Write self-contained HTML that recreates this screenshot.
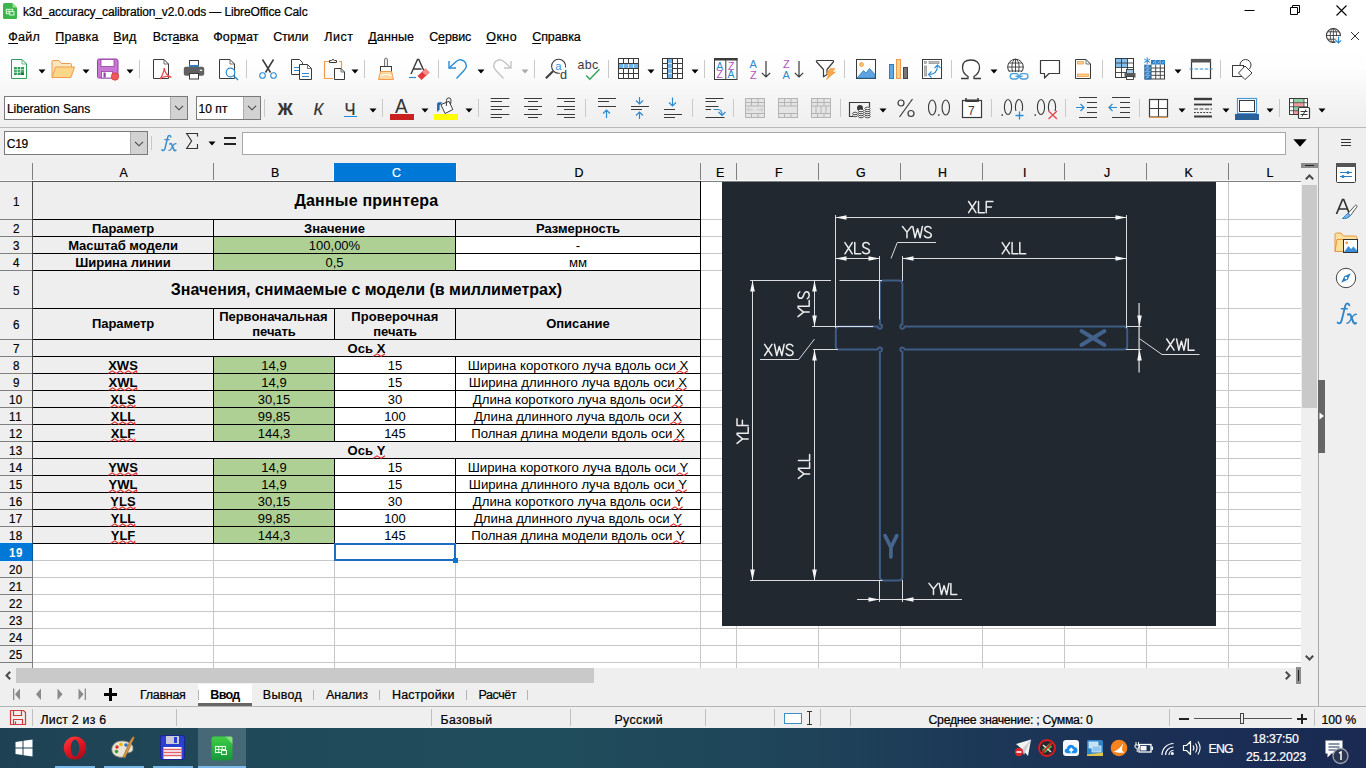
<!DOCTYPE html>
<html><head><meta charset="utf-8"><title>calc</title>
<style>
html,body{margin:0;padding:0;}
body{width:1366px;height:768px;overflow:hidden;position:relative;background:#efefef;font-family:"Liberation Sans",sans-serif;font-size:12px;color:#000;}
.abs{position:absolute;}
div,span,svg{box-sizing:border-box;}
.t{position:absolute;white-space:nowrap;line-height:1;}
.cell{overflow:hidden;white-space:nowrap;}
.wv{text-decoration:underline wavy #e03030 1px;text-underline-offset:2px;text-decoration-skip-ink:none;}

</style></head>
<body>
<!-- titlebar -->

<div class="abs" style="left:0;top:0;width:1366px;height:50px;background:#fff;"></div>
<svg class="abs" style="left:3px;top:3px" width="14" height="16" viewBox="0 0 14 16">
 <path d="M1.500 0H9.500L14 4.500V14.500Q14 16 12.500 16H1.500Q0 16 0 14.500V1.500Q0 0 1.500 0Z" fill="#3cb54a"/>
 <path d="M9.500 0L14 4.500H9.500Z" fill="#96e38f"/>
 <rect x="3.300" y="6.300" width="6.400" height="4.400" fill="none" stroke="#eaffea" stroke-width="0.900"/>
 <path d="M3.300 8.500H9.700M6 6.300V10.700" stroke="#eaffea" stroke-width="0.700"/>
 <rect x="6.800" y="8.600" width="4.200" height="3.400" fill="#3cb54a" stroke="#eaffea" stroke-width="0.900"/>
</svg>
<div class="t" style="left:23.0px;top:5.3px;font-size:12px;line-height:14px;letter-spacing:-0.13px;-webkit-text-stroke:0.22px #000;">k3d_accuracy_calibration_v2.0.ods — LibreOffice Calc</div>

<svg class="abs" style="left:1240px;top:0" width="126" height="24" viewBox="0 0 126 24">
 <path d="M4.5 10.5h10" stroke="#000" stroke-width="1"/>
 <path d="M50.5 7.500h7v7h-7zM52.5 7.500v-2h7v7h-2" fill="none" stroke="#000" stroke-width="1"/>
 <path d="M96.5 5.500l10 10M106.500 5.500l-10 10" stroke="#000" stroke-width="1.1"/>
</svg>

<!-- menubar -->
<div class="t" style="left:8.2px;top:30.1px;font-size:12.5px;line-height:15px;letter-spacing:0.316px;-webkit-text-stroke:0.22px #000;"><span style="text-decoration:underline;text-underline-offset:1.5px;text-decoration-thickness:1px">Ф</span>айл</div>
<div class="t" style="left:55.2px;top:30.1px;font-size:12.5px;line-height:15px;letter-spacing:0.211px;-webkit-text-stroke:0.22px #000;"><span style="text-decoration:underline;text-underline-offset:1.5px;text-decoration-thickness:1px">П</span>равка</div>
<div class="t" style="left:113.2px;top:30.1px;font-size:12.5px;line-height:15px;letter-spacing:0.292px;-webkit-text-stroke:0.22px #000;"><span style="text-decoration:underline;text-underline-offset:1.5px;text-decoration-thickness:1px">В</span>ид</div>
<div class="t" style="left:152.7px;top:30.1px;font-size:12.5px;line-height:15px;letter-spacing:-0.138px;-webkit-text-stroke:0.22px #000;">Вст<span style="text-decoration:underline;text-underline-offset:1.5px;text-decoration-thickness:1px">а</span>вка</div>
<div class="t" style="left:213.2px;top:30.1px;font-size:12.5px;line-height:15px;letter-spacing:0.182px;-webkit-text-stroke:0.22px #000;">Фор<span style="text-decoration:underline;text-underline-offset:1.5px;text-decoration-thickness:1px">м</span>ат</div>
<div class="t" style="left:273.2px;top:30.1px;font-size:12.5px;line-height:15px;letter-spacing:-0.203px;-webkit-text-stroke:0.22px #000;">Стили</div>
<div class="t" style="left:324.2px;top:30.1px;font-size:12.5px;line-height:15px;letter-spacing:0.582px;-webkit-text-stroke:0.22px #000;">Лист</div>
<div class="t" style="left:368.2px;top:30.1px;font-size:12.5px;line-height:15px;letter-spacing:0.138px;-webkit-text-stroke:0.22px #000;"><span style="text-decoration:underline;text-underline-offset:1.5px;text-decoration-thickness:1px">Д</span>анные</div>
<div class="t" style="left:429.2px;top:30.1px;font-size:12.5px;line-height:15px;letter-spacing:-0.135px;-webkit-text-stroke:0.22px #000;">С<span style="text-decoration:underline;text-underline-offset:1.5px;text-decoration-thickness:1px">е</span>рвис</div>
<div class="t" style="left:486.2px;top:30.1px;font-size:12.5px;line-height:15px;letter-spacing:0.488px;-webkit-text-stroke:0.22px #000;"><span style="text-decoration:underline;text-underline-offset:1.5px;text-decoration-thickness:1px">О</span>кно</div>
<div class="t" style="left:532.2px;top:30.1px;font-size:12.5px;line-height:15px;letter-spacing:-0.078px;-webkit-text-stroke:0.22px #000;"><span style="text-decoration:underline;text-underline-offset:1.5px;text-decoration-thickness:1px">С</span>правка</div>

<svg class="abs" style="left:1324px;top:26px" width="40" height="20" viewBox="0 0 40 20">
 <circle cx="9.400" cy="9.500" r="7" fill="#fff" stroke="#3a3a3a" stroke-width="1.100"/>
 <ellipse cx="9.400" cy="9.500" rx="3.200" ry="7" fill="none" stroke="#3a3a3a" stroke-width="0.900"/>
 <path d="M2.400 9.500h14M9.400 2.500v14M3.800 5.800h11.200M3.800 13.200h11.200" stroke="#3a3a3a" stroke-width="0.900" fill="none"/>
 <rect x="11.500" y="10" width="6" height="8" fill="#fff" opacity="0.850"/>
 <path d="M14.500 10.500v6.300M11.800 14.300l2.700 2.700 2.700-2.700" stroke="#2a8ad4" stroke-width="1.100" fill="none"/>
 <path d="M27 6l8 8M35 6l-8 8" stroke="#333" stroke-width="1"/>
</svg>

<!-- toolbar1 -->
<div class="abs" style="left:0;top:50px;width:1366px;height:77px;background:linear-gradient(180deg,#ffffff 0%,#fdfdfd 25%,#f4f4f4 65%,#efefef 100%);"></div><div class="abs" style="left:0px;top:127px;width:1366px;height:1px;background:#b9b9b9;"></div>
<svg class="abs" style="left:7.0px;top:57px;overflow:visible" width="24" height="24" viewBox="0 0 24 24"><path d="M4.500 2.500H15L19.500 7V21.500H4.500Z" fill="#fff" stroke="#2e9e5a" stroke-width="1"/><path d="M15 2.500V7H19.500" fill="none" stroke="#2e9e5a" stroke-width="0.700"/>
<rect x="7" y="10" width="10" height="8" fill="#2e9e5a"/><path d="M7 12.700H17M7 15.300H17M10.300 10V18M13.600 10V18" stroke="#fff" stroke-width="0.700"/><path d="M13.600 15.300H17V18H13.600Z" fill="#1c7a40"/></svg>
<svg class="abs" style="left:51.4px;top:57px;overflow:visible" width="24" height="24" viewBox="0 0 24 24"><path d="M1 20V4.500Q1 3.500 2 3.500H8L10.500 6.500H19.500Q20.500 6.500 20.500 7.500V10" fill="#fbe7bd" stroke="#f29b4a" stroke-width="1"/>
<path d="M1 20.500L4.500 10H23.500L20 20.500Z" fill="#fad689" stroke="#f29b4a" stroke-width="1" stroke-linejoin="round"/></svg>
<svg class="abs" style="left:95.7px;top:57px;overflow:visible" width="24" height="24" viewBox="0 0 24 24"><path d="M3 2H20Q22 2 22 4V19Q22 21 20 21H3Q1.500 21 1.500 19.500V3.500Q1.500 2 3 2Z" fill="#c878d2" stroke="#9a3fa6" stroke-width="1"/>
<rect x="5" y="2.500" width="13" height="7" fill="#fff" stroke="#9a3fa6" stroke-width="0.800"/>
<rect x="5.500" y="14.500" width="11" height="6.500" fill="#fff" stroke="#9a3fa6" stroke-width="0.800"/><rect x="7.500" y="15.500" width="2.200" height="5" fill="#9a3fa6"/>
<circle cx="19" cy="19.500" r="3.700" fill="#ee5a5a" stroke="#d83a3a" stroke-width="0.800"/></svg>
<svg class="abs" style="left:149.0px;top:57px;overflow:visible" width="24" height="24" viewBox="0 0 24 24"><path d="M4.500 2.500H15L19.500 7V21.500H4.500Z" fill="#fff" stroke="#3a3a3a" stroke-width="1"/><path d="M15 2.500V7H19.500" fill="none" stroke="#3a3a3a" stroke-width="0.700"/>
<path d="M11 22C13 19 15 15 15.300 11C15.500 14 17 18 22.500 20.500M11 22C14 19.500 18 18.500 22.500 20.500" fill="none" stroke="#e5484d" stroke-width="1.300"/></svg>
<svg class="abs" style="left:182.0px;top:57px;overflow:visible" width="24" height="24" viewBox="0 0 24 24"><rect x="7.500" y="3.500" width="9" height="6" fill="#fff" stroke="#3a3a3a" stroke-width="1"/>
<rect x="7" y="8" width="10" height="2.500" fill="#2a7fc4"/>
<rect x="1.800" y="9.800" width="20.400" height="9" rx="2" fill="#606060"/>
<rect x="7.500" y="16.500" width="9" height="5.500" fill="#fff" stroke="#3a3a3a" stroke-width="1"/><rect x="17.800" y="12.700" width="2.400" height="1.200" fill="#fff"/></svg>
<svg class="abs" style="left:215.0px;top:57px;overflow:visible" width="24" height="24" viewBox="0 0 24 24"><path d="M4.500 2.500H15L19.500 7V21.500H4.500Z" fill="#fff" stroke="#3a3a3a" stroke-width="1"/><path d="M15 2.500V7H19.500" fill="none" stroke="#3a3a3a" stroke-width="0.700"/>
<circle cx="15.500" cy="15.500" r="4.300" fill="#fff" stroke="#2a8ad4" stroke-width="1.200"/><path d="M18.700 18.700L23 23" stroke="#2a8ad4" stroke-width="1.400"/></svg>
<svg class="abs" style="left:256.0px;top:57px;overflow:visible" width="24" height="24" viewBox="0 0 24 24"><path d="M6.500 2.500L14.500 15.500M17.500 2.500L9.500 15.500" stroke="#3a3a3a" stroke-width="1.500" fill="none"/>
<circle cx="6.500" cy="18.500" r="2.800" fill="#fff" stroke="#2a8ad4" stroke-width="1.100"/><circle cx="17.500" cy="18.500" r="2.800" fill="#fff" stroke="#2a8ad4" stroke-width="1.100"/></svg>
<svg class="abs" style="left:289.0px;top:57px;overflow:visible" width="24" height="24" viewBox="0 0 24 24"><path d="M2.500 2.500H10.500L13.500 5.500V17.500H2.500Z" fill="#fff" stroke="#3a3a3a" stroke-width="1"/><path d="M5 10.500H11M5 13.500H11" stroke="#2a8ad4" stroke-width="1"/>
<path d="M10.500 7.500H18.500L22.500 11.500V22.500H10.500Z" fill="#fff" stroke="#3a3a3a" stroke-width="1"/><path d="M18.500 7.500V11.500H22.500" fill="none" stroke="#3a3a3a" stroke-width="0.700"/><path d="M13 16.500H20M13 19.500H20" stroke="#2a8ad4" stroke-width="1"/></svg>
<svg class="abs" style="left:321.5px;top:57px;overflow:visible" width="24" height="24" viewBox="0 0 24 24"><path d="M7 4.500H2.500V21.500H11M17 4.500H19.500V12" fill="none" stroke="#f29b4a" stroke-width="1.200"/>
<path d="M7.500 5.500V3.500H9.500Q11 1 12.500 3.500H14.500V5.500Z" fill="#fff" stroke="#3a3a3a" stroke-width="1"/>
<path d="M12.500 11.500H19L22.500 15V22.500H12.500Z" fill="#fff" stroke="#3a3a3a" stroke-width="1"/><path d="M19 11.500V15H22.500" fill="none" stroke="#3a3a3a" stroke-width="0.700"/></svg>
<svg class="abs" style="left:373.5px;top:57px;overflow:visible" width="24" height="24" viewBox="0 0 24 24"><path d="M10.500 9V3Q10.500 1 12 1Q13.500 1 13.500 3V9" fill="#e8e8e8" stroke="#777" stroke-width="1"/>
<rect x="6.500" y="9.500" width="11" height="5" fill="#fff" stroke="#3a3a3a" stroke-width="1"/>
<path d="M6.500 14.500L4.500 22.500H19.500L17.500 14.500Z" fill="#fbd9a0" stroke="#f29b4a" stroke-width="1"/><path d="M6 18.500Q12 16.500 18.200 18.500" stroke="#fff" stroke-width="1" fill="none"/></svg>
<svg class="abs" style="left:406.5px;top:57px;overflow:visible" width="24" height="24" viewBox="0 0 24 24"><path d="M4 17L10.500 2.500H11.800L17 14M6.300 12H14.500" fill="none" stroke="#3a3a3a" stroke-width="1.400"/>
<path d="M2 20.500H9" stroke="#2a8ad4" stroke-width="1.200"/>
<path d="M10.500 19L18.500 11.500L22.500 15.500L14.500 23Z" fill="#e03a3a"/><path d="M15 14.800L19 18.800L22.500 15.500L18.500 11.500Z" fill="#f58a8a"/></svg>
<svg class="abs" style="left:446.0px;top:57px;overflow:visible" width="24" height="24" viewBox="0 0 24 24"><path d="M4.500 11.500H14Q20.500 11.500 20.500 6.500" fill="none" stroke="none"/>
<path d="M3 4V11H10" fill="none" stroke="#2a8ad4" stroke-width="1.400"/><path d="M3 11L10.500 4.200Q14.500 1 18.500 4.500Q22.500 9 18 13.500L10.500 21.500" fill="none" stroke="#2a8ad4" stroke-width="1.400"/></svg>
<svg class="abs" style="left:490.0px;top:57px;overflow:visible" width="24" height="24" viewBox="0 0 24 24"><path d="M21 4V11H14" fill="none" stroke="#c4c4c4" stroke-width="1.400"/><path d="M21 11L13.500 4.200Q9.500 1 5.500 4.500Q1.500 9 6 13.500L13.500 21.500" fill="none" stroke="#c4c4c4" stroke-width="1.400"/></svg>
<svg class="abs" style="left:545.0px;top:57px;overflow:visible" width="24" height="24" viewBox="0 0 24 24"><path d="M20.500 10.500A7 7 0 1 0 14.800 16.200" fill="#fff" stroke="#3a3a3a" stroke-width="1.100"/><path d="M0.900 21.300L8 14.200" stroke="#3a3a3a" stroke-width="2"/>
<text x="10.300" y="12.600" font-family="Liberation Sans" font-size="11.300" fill="#3a94d6">a</text><text x="15" y="21.600" font-family="Liberation Sans" font-size="12.700" fill="#3a3a3a">d</text></svg>
<svg class="abs" style="left:577.0px;top:57px;overflow:visible" width="24" height="24" viewBox="0 0 24 24"><text x="0.600" y="11.600" font-family="Liberation Sans" font-size="12.400" fill="#3a3a3a" letter-spacing="0.350">abc</text>
<path d="M9.200 18.500L12.800 22.200L22.500 12.300" fill="none" stroke="#2ea35a" stroke-width="1.400"/></svg>
<svg class="abs" style="left:616.5px;top:57px;overflow:visible" width="24" height="24" viewBox="0 0 24 24"><rect x="1.500" y="1.500" width="20" height="20" fill="#fff" stroke="#3a3a3a" stroke-width="1"/><rect x="2" y="6.500" width="19" height="5" fill="#83beec"/><rect x="2" y="6.500" width="19" height="5" fill="#59a5e6" opacity="0.500"/><path d="M6.500 1.500V21.500M11.500 1.500V21.500M16.500 1.500V21.500M1.500 6.500H21.500M1.500 11.500H21.500M1.500 16.500H21.500" stroke="#3a3a3a" stroke-width="1"/><path d="M6.500 7V11M11.500 7V11M16.500 7V11" stroke="#cfe6fa" stroke-width="1"/></svg>
<svg class="abs" style="left:660.5px;top:57px;overflow:visible" width="24" height="24" viewBox="0 0 24 24"><rect x="1.500" y="1.500" width="20" height="20" fill="#fff" stroke="#3a3a3a" stroke-width="1"/><rect x="6.500" y="2" width="5" height="19" fill="#83beec"/><rect x="6.500" y="2" width="5" height="19" fill="#59a5e6" opacity="0.500"/><path d="M6.500 1.500V21.500M11.500 1.500V21.500M16.500 1.500V21.500M1.500 6.500H21.500M1.500 11.500H21.500M1.500 16.500H21.500" stroke="#3a3a3a" stroke-width="1"/><path d="M7 6.500H11M7 11.500H11M7 16.500H11" stroke="#cfe6fa" stroke-width="1"/></svg>
<svg class="abs" style="left:713.5px;top:57px;overflow:visible" width="24" height="24" viewBox="0 0 24 24"><rect x="0.500" y="1.500" width="22.500" height="21" fill="#fff" stroke="#3a3a3a" stroke-width="1"/><rect x="0" y="1" width="23.500" height="2.500" fill="#3a3a3a"/><path d="M11.800 3V22.500" stroke="#3a3a3a" stroke-width="1"/>
<text x="2.300" y="12.600" font-family="Liberation Sans" font-size="10.500" fill="#2a8ad4">A</text><text x="2.600" y="21" font-family="Liberation Sans" font-size="10.500" fill="#b452bd">Z</text>
<text x="13.900" y="12.600" font-family="Liberation Sans" font-size="10.500" fill="#b452bd">Z</text><text x="13.500" y="21" font-family="Liberation Sans" font-size="10.500" fill="#2a8ad4">A</text></svg>
<svg class="abs" style="left:747.5px;top:57px;overflow:visible" width="24" height="24" viewBox="0 0 24 24"><text x="1.500" y="11" font-family="Liberation Sans" font-size="11" fill="#2a8ad4">A</text><text x="2" y="22" font-family="Liberation Sans" font-size="11" fill="#b452bd">Z</text>
<path d="M18 4V20M13.800 15.800L18 20L22.200 15.800" fill="none" stroke="#3a3a3a" stroke-width="1.200"/></svg>
<svg class="abs" style="left:780.5px;top:57px;overflow:visible" width="24" height="24" viewBox="0 0 24 24"><text x="2" y="11" font-family="Liberation Sans" font-size="11" fill="#b452bd">Z</text><text x="1.500" y="22" font-family="Liberation Sans" font-size="11" fill="#2a8ad4">A</text>
<path d="M18 4V20M13.800 15.800L18 20L22.200 15.800" fill="none" stroke="#3a3a3a" stroke-width="1.200"/></svg>
<svg class="abs" style="left:814.0px;top:57px;overflow:visible" width="24" height="24" viewBox="0 0 24 24"><path d="M3.500 3.500H18.500Q20.300 3.500 19.300 5L13 12.500V17.500L9.500 19.800V12.500L2.700 5Q1.700 3.500 3.500 3.500Z" fill="#fff" stroke="#3a3a3a" stroke-width="1.200" stroke-linejoin="round"/>
<path d="M16 11.500H21L18.300 15H21.500L12.500 22.500L15 17H12.300Z" fill="#f7a84a" stroke="#e98a2a" stroke-width="0.500"/></svg>
<svg class="abs" style="left:854.0px;top:57px;overflow:visible" width="24" height="24" viewBox="0 0 24 24"><rect x="2.500" y="2.500" width="19" height="19" fill="#fff" stroke="#3a3a3a" stroke-width="1"/>
<circle cx="7.500" cy="7.500" r="2" fill="#f9c06a" stroke="#f29b4a" stroke-width="0.800"/>
<path d="M3 21L9.500 13.500L12 16L15.500 11.500L21 17.500V21Z" fill="#5fa4e0" stroke="#2a7fc4" stroke-width="0.800"/></svg>
<svg class="abs" style="left:886.5px;top:57px;overflow:visible" width="24" height="24" viewBox="0 0 24 24"><rect x="2.500" y="7.500" width="4" height="14" fill="#62a8e6" stroke="#2a7fc4" stroke-width="1"/>
<rect x="9.500" y="2.500" width="4" height="19" fill="#fad28a" stroke="#f29b4a" stroke-width="1"/>
<rect x="16.500" y="10.500" width="4" height="11" fill="#777" stroke="#444" stroke-width="1"/></svg>
<svg class="abs" style="left:920.0px;top:57px;overflow:visible" width="24" height="24" viewBox="0 0 24 24"><rect x="2.500" y="2.500" width="19" height="19" fill="#fff" stroke="#3a3a3a" stroke-width="1"/>
<rect x="4.500" y="4.500" width="2" height="2" fill="#bbb" stroke="#888" stroke-width="0.600"/><rect x="9" y="4.500" width="10" height="2.200" fill="#bbb" stroke="#888" stroke-width="0.600"/><rect x="4.500" y="9" width="2.200" height="10" fill="#bbb" stroke="#888" stroke-width="0.600"/>
<path d="M8.500 17.500Q17.500 17.500 17.500 8.500M14.500 11L17.500 8L20.500 11M11.500 14.500L8.500 17.500L11.500 20.500" fill="none" stroke="#2a8ad4" stroke-width="1.100"/></svg>
<svg class="abs" style="left:959.0px;top:57px;overflow:visible" width="24" height="24" viewBox="0 0 24 24"><path d="M2 21.500H9V19.500Q3.500 16.500 3.500 10.500Q3.500 3 12 3Q20.500 3 20.500 10.500Q20.500 16.500 15 19.500V21.500H22" fill="none" stroke="#3a3a3a" stroke-width="1.300"/></svg>
<svg class="abs" style="left:1005.0px;top:57px;overflow:visible" width="24" height="24" viewBox="0 0 24 24"><circle cx="10.500" cy="10" r="7.800" fill="#fff" stroke="#3a3a3a" stroke-width="1"/><ellipse cx="10.500" cy="10" rx="3.600" ry="7.800" fill="none" stroke="#3a3a3a" stroke-width="0.900"/>
<path d="M2.700 10H18.300M10.500 2.200V17.800M4 6H17M4 14H17" stroke="#3a3a3a" stroke-width="0.900" fill="none"/>
<rect x="4" y="15" width="20" height="8.500" fill="#fbfbfb"/>
<rect x="5.200" y="16.600" width="8.300" height="5.400" rx="2.700" fill="none" stroke="#4aa0dc" stroke-width="1.300"/><rect x="14.700" y="16.600" width="8.300" height="5.400" rx="2.700" fill="none" stroke="#4aa0dc" stroke-width="1.300"/><path d="M10.500 19.300H17.700" stroke="#4aa0dc" stroke-width="1.300"/></svg>
<svg class="abs" style="left:1038.0px;top:57px;overflow:visible" width="24" height="24" viewBox="0 0 24 24"><path d="M2.500 3.500H21.500V16.500H11L6.500 21V16.500H2.500Z" fill="#fff" stroke="#3a3a3a" stroke-width="1.200" stroke-linejoin="round"/></svg>
<svg class="abs" style="left:1071.0px;top:57px;overflow:visible" width="24" height="24" viewBox="0 0 24 24"><path d="M4.500 2.500H15L19.500 7V21.500H4.500Z" fill="#fff" stroke="#3a3a3a" stroke-width="1"/><path d="M15 2.500V7H19.500" fill="none" stroke="#3a3a3a" stroke-width="0.700"/>
<rect x="6.500" y="4.500" width="6" height="2.500" fill="#fad28a" stroke="#f29b4a" stroke-width="0.800"/><rect x="6.500" y="17" width="11" height="2.500" fill="#fad28a" stroke="#f29b4a" stroke-width="0.800"/></svg>
<svg class="abs" style="left:1112.5px;top:57px;overflow:visible" width="24" height="24" viewBox="0 0 24 24"><rect x="2.500" y="1.500" width="18" height="19" fill="#fff" stroke="#3a3a3a" stroke-width="1"/><rect x="3" y="2" width="11.500" height="8" fill="#83beec"/>
<path d="M8.500 1.500V20.500M14.500 1.500V20.500M2.500 6H20.500M2.500 10.500H20.500M2.500 15.500H20.500" stroke="#3a3a3a" stroke-width="0.900"/>
<rect x="13.500" y="12.500" width="7" height="4" fill="#9ccbf0" stroke="#3a3a3a" stroke-width="0.900"/><path d="M11.500 16H22.500V20.500H11.500Z" fill="#5a5a5a"/><rect x="13.500" y="19.500" width="7" height="3" fill="#fff" stroke="#3a3a3a" stroke-width="0.900"/></svg>
<svg class="abs" style="left:1143.0px;top:57px;overflow:visible" width="24" height="24" viewBox="0 0 24 24"><rect x="2" y="3.500" width="19.500" height="18.500" fill="#fff" stroke="#3a3a3a" stroke-width="1"/><rect x="8" y="3" width="14" height="4.500" fill="#2a7fc4"/><rect x="1.500" y="7.500" width="6.500" height="15" fill="#2a7fc4"/>
<path d="M8 7.500V22M12.700 7.500V22M17.300 7.500V22M8 11H21.500M8 14.700H21.500M8 18.300H21.500" stroke="#3a3a3a" stroke-width="0.900"/>
<path d="M1.500 11H8M1.500 14.700H8M1.500 18.300H8M12.700 3V7.500M17.300 3V7.500" stroke="#9ccdf2" stroke-width="0.700"/>
<path d="M3.300 9.800L5.800 8.600M3.300 13.500L5.800 12.300M3.300 17.200L5.800 16M3.300 20.800L5.800 19.600M10 6L11.800 4.600M14.600 6L16.400 4.600M19 6L20.800 4.600" stroke="#cfe6fa" stroke-width="0.800"/>
<rect x="0.500" y="0" width="7.500" height="7.500" fill="#fdfdfd"/>
<path d="M4.200 0.300V7.200M1.200 2L7.200 5.500M7.200 2L1.200 5.500" stroke="#2a8ad4" stroke-width="1"/></svg>
<svg class="abs" style="left:1189.0px;top:57px;overflow:visible" width="24" height="24" viewBox="0 0 24 24"><rect x="2.500" y="2.500" width="19" height="19" fill="#fff" stroke="#3a3a3a" stroke-width="1.200"/><rect x="2" y="2" width="20" height="3.500" fill="#555"/>
<path d="M0.500 12H23.500" stroke="#2a8ad4" stroke-width="1.100" stroke-dasharray="3.500 1.600"/></svg>
<svg class="abs" style="left:1230.0px;top:57px;overflow:visible" width="24" height="24" viewBox="0 0 24 24"><circle cx="15.500" cy="8" r="5.500" fill="#fff" stroke="#3a3a3a" stroke-width="1"/><rect x="2.500" y="8.500" width="11" height="11" fill="#fff" stroke="#3a3a3a" stroke-width="1"/>
<path d="M15 9L22 16L15 22.500L8.500 16Z" fill="#fff" stroke="#3a3a3a" stroke-width="1"/></svg>
<svg class="abs" style="left:38.2px;top:68.5px" width="8" height="5" viewBox="0 0 8 5"><path d="M0.500 0.500H7.500L4 4.500Z" fill="#000"/></svg>
<svg class="abs" style="left:82.3px;top:68.5px" width="8" height="5" viewBox="0 0 8 5"><path d="M0.500 0.500H7.500L4 4.500Z" fill="#000"/></svg>
<svg class="abs" style="left:126.0px;top:68.5px" width="8" height="5" viewBox="0 0 8 5"><path d="M0.500 0.500H7.500L4 4.500Z" fill="#000"/></svg>
<svg class="abs" style="left:351.2px;top:68.5px" width="8" height="5" viewBox="0 0 8 5"><path d="M0.500 0.500H7.500L4 4.500Z" fill="#000"/></svg>
<svg class="abs" style="left:477.0px;top:68.5px" width="8" height="5" viewBox="0 0 8 5"><path d="M0.500 0.500H7.500L4 4.500Z" fill="#000"/></svg>
<svg class="abs" style="left:647.0px;top:68.5px" width="8" height="5" viewBox="0 0 8 5"><path d="M0.500 0.500H7.500L4 4.500Z" fill="#000"/></svg>
<svg class="abs" style="left:691.2px;top:68.5px" width="8" height="5" viewBox="0 0 8 5"><path d="M0.500 0.500H7.500L4 4.500Z" fill="#000"/></svg>
<svg class="abs" style="left:990.3px;top:68.5px" width="8" height="5" viewBox="0 0 8 5"><path d="M0.500 0.500H7.500L4 4.500Z" fill="#000"/></svg>
<svg class="abs" style="left:1174.1px;top:68.5px" width="8" height="5" viewBox="0 0 8 5"><path d="M0.500 0.500H7.500L4 4.500Z" fill="#000"/></svg>
<svg class="abs" style="left:521.2px;top:68.5px" width="8" height="5" viewBox="0 0 8 5"><path d="M0.500 0.500H7.500L4 4.500Z" fill="#a8a8a8"/></svg>
<div class="abs" style="left:139px;top:60px;width:1px;height:18px;background:#c9c9c9;"></div>
<div class="abs" style="left:246px;top:60px;width:1px;height:18px;background:#c9c9c9;"></div>
<div class="abs" style="left:364px;top:60px;width:1px;height:18px;background:#c9c9c9;"></div>
<div class="abs" style="left:438px;top:60px;width:1px;height:18px;background:#c9c9c9;"></div>
<div class="abs" style="left:534px;top:60px;width:1px;height:18px;background:#c9c9c9;"></div>
<div class="abs" style="left:608px;top:60px;width:1px;height:18px;background:#c9c9c9;"></div>
<div class="abs" style="left:704px;top:60px;width:1px;height:18px;background:#c9c9c9;"></div>
<div class="abs" style="left:844px;top:60px;width:1px;height:18px;background:#c9c9c9;"></div>
<div class="abs" style="left:951px;top:60px;width:1px;height:18px;background:#c9c9c9;"></div>
<div class="abs" style="left:1102px;top:60px;width:1px;height:18px;background:#c9c9c9;"></div>
<div class="abs" style="left:1220px;top:60px;width:1px;height:18px;background:#c9c9c9;"></div>

<!-- toolbar2 -->
<div class="abs" style="left:4px;top:96px;width:184px;height:24px;background:#fff;border:1px solid #7a7a7a;"></div><div class="abs" style="left:170px;top:97px;width:17px;height:22px;background:#d2d2d2;border-left:1px solid #adadad;"></div><svg class="abs" style="left:174.0px;top:105.0px" width="10" height="6" viewBox="0 0 10 6"><path d="M1 0.800L5 4.800L9 0.800" fill="none" stroke="#444" stroke-width="1.100"/></svg><div class="abs" style="left:196px;top:96px;width:65px;height:24px;background:#fff;border:1px solid #7a7a7a;"></div><div class="abs" style="left:243px;top:97px;width:17px;height:22px;background:#d2d2d2;border-left:1px solid #adadad;"></div><svg class="abs" style="left:247.0px;top:105.0px" width="10" height="6" viewBox="0 0 10 6"><path d="M1 0.800L5 4.800L9 0.800" fill="none" stroke="#444" stroke-width="1.100"/></svg><div class="t" style="left:6.9px;top:102.0px;font-size:12px;line-height:14px;letter-spacing:0.001px;-webkit-text-stroke:0.22px #000;">Liberation Sans</div>
<div class="t" style="left:198.5px;top:102.0px;font-size:12px;line-height:14px;letter-spacing:0.062px;-webkit-text-stroke:0.22px #000;">10 пт</div>
<svg class="abs" style="left:488.0px;top:96px;overflow:visible" width="24" height="24" viewBox="0 0 24 24"><path d="M2.7 2.5H21.3M2.7 5.5H14M2.7 10.5H21.3M2.7 13.5H14M2.7 18.5H21.3M2.7 21.5H14" stroke="#3a3a3a" stroke-width="1.100"/></svg>
<svg class="abs" style="left:521.0px;top:96px;overflow:visible" width="24" height="24" viewBox="0 0 24 24"><path d="M3 2.5H21M7 5.5H17M3 10.5H21M7 13.5H17M3 18.5H21M7 21.5H17" stroke="#3a3a3a" stroke-width="1.100"/></svg>
<svg class="abs" style="left:554.0px;top:96px;overflow:visible" width="24" height="24" viewBox="0 0 24 24"><path d="M3 2.5H21M10 5.5H21M3 10.5H21M10 13.5H21M3 18.5H21M10 21.5H21" stroke="#3a3a3a" stroke-width="1.100"/></svg>
<svg class="abs" style="left:595.0px;top:96px;overflow:visible" width="24" height="24" viewBox="0 0 24 24"><path d="M3 2.500H21M3 5.500H14M3 10.500H21" stroke="#3a3a3a" stroke-width="1.100"/><path d="M11.500 22V14M8 17.500L11.500 14L15 17.500" fill="none" stroke="#2a8ad4" stroke-width="1.200"/></svg>
<svg class="abs" style="left:628.0px;top:96px;overflow:visible" width="24" height="24" viewBox="0 0 24 24"><path d="M3 10.500H21M3 13.500H14" stroke="#3a3a3a" stroke-width="1.100"/><path d="M11.500 1V8M8 4.500L11.500 8L15 4.500M11.500 23V16M8 19.500L11.500 16L15 19.500" fill="none" stroke="#2a8ad4" stroke-width="1.200"/></svg>
<svg class="abs" style="left:661.0px;top:96px;overflow:visible" width="24" height="24" viewBox="0 0 24 24"><path d="M3 13.500H14M3 18.500H21M3 21.500H14" stroke="#3a3a3a" stroke-width="1.100"/><path d="M11.500 1.500V10M8 6.500L11.500 10L15 6.500" fill="none" stroke="#2a8ad4" stroke-width="1.200"/></svg>
<svg class="abs" style="left:702.5px;top:96px;overflow:visible" width="24" height="24" viewBox="0 0 24 24"><path d="M2.500 2.500H20.500M2.500 5.500H13M2.500 10.500H15.500M2.500 13.500H8M2.500 21.500H21.500" stroke="#3a3a3a" stroke-width="1.100"/><path d="M10.500 13.500H15Q19 13.500 19 19M15.500 16L19 19.500L22.500 16" fill="none" stroke="#2a8ad4" stroke-width="1.200"/></svg>
<svg class="abs" style="left:743.0px;top:96px;overflow:visible" width="24" height="24" viewBox="0 0 24 24"><rect x="2.500" y="2.500" width="19" height="19" fill="#e4e4e4" stroke="#b4b4b4" stroke-width="1"/><path d="M2.500 6.500H21.500M2.500 17.500H21.500M2.500 10H21.500M8.500 2.500V10M15 2.500V10M8.500 17.500V21.500M15 17.500V21.500" stroke="#b4b4b4" stroke-width="1"/><path d="M3 6.500H21M3 10H21M3 17.500H21" stroke="#f4f4f4" stroke-width="0"/><path d="M4 13.700H10M14 13.700H20M6 11.700L4 13.700L6 15.700M18 11.700L20 13.700L18 15.700" fill="none" stroke="#c4c4c4" stroke-width="0.900"/></svg>
<svg class="abs" style="left:776.0px;top:96px;overflow:visible" width="24" height="24" viewBox="0 0 24 24"><rect x="2.500" y="2.500" width="19" height="19" fill="#e4e4e4" stroke="#b4b4b4" stroke-width="1"/><path d="M2.500 6.500H21.500M2.500 17.500H21.500M2.500 10H21.500M8.500 2.500V10M15 2.500V10M8.500 17.500V21.500M15 17.500V21.500" stroke="#b4b4b4" stroke-width="1"/><path d="M3 6.500H21M3 10H21M3 17.500H21" stroke="#f4f4f4" stroke-width="0"/></svg>
<svg class="abs" style="left:809.0px;top:96px;overflow:visible" width="24" height="24" viewBox="0 0 24 24"><rect x="2.500" y="2.500" width="19" height="19" fill="#e4e4e4" stroke="#b4b4b4" stroke-width="1"/><path d="M2.500 6.500H21.500M2.500 17.500H21.500M2.500 10H21.500M8.500 2.500V10M15 2.500V10M8.500 17.500V21.500M15 17.500V21.500" stroke="#b4b4b4" stroke-width="1"/><path d="M3 6.500H21M3 10H21M3 17.500H21" stroke="#f4f4f4" stroke-width="0"/><path d="M7 10V17.500M12 10V17.500M17 10V17.500" stroke="#b4b4b4" stroke-width="1"/></svg>
<svg class="abs" style="left:848.0px;top:96px;overflow:visible" width="24" height="24" viewBox="0 0 24 24"><path d="M5 20.500H1.500V6.500H21.500V11" fill="none" stroke="#3a3a3a" stroke-width="1.200"/><circle cx="12" cy="12" r="3" fill="#3a3a3a"/>
<g fill="#fff" stroke="#3a3a3a" stroke-width="0.900"><ellipse cx="7" cy="19.500" rx="2.300" ry="1.300"/><ellipse cx="7" cy="17.500" rx="2.300" ry="1.300"/>
<ellipse cx="13" cy="20.500" rx="2.600" ry="1.300"/><ellipse cx="13" cy="18.500" rx="2.600" ry="1.300"/><ellipse cx="13" cy="16.500" rx="2.600" ry="1.300"/><ellipse cx="13" cy="14.500" rx="2.600" ry="1.300"/>
<ellipse cx="19.500" cy="20.500" rx="2.600" ry="1.300"/><ellipse cx="19.500" cy="18.500" rx="2.600" ry="1.300"/><ellipse cx="19.500" cy="16.500" rx="2.600" ry="1.300"/><ellipse cx="19.500" cy="14.500" rx="2.600" ry="1.300"/><ellipse cx="19.500" cy="12.500" rx="2.600" ry="1.300"/></g></svg>
<svg class="abs" style="left:894.0px;top:96px;overflow:visible" width="24" height="24" viewBox="0 0 24 24"><circle cx="7" cy="7" r="3" fill="none" stroke="#3a3a3a" stroke-width="1.200"/><circle cx="17" cy="17.500" r="3" fill="none" stroke="#3a3a3a" stroke-width="1.200"/><path d="M18.500 3L5.500 21" stroke="#3a3a3a" stroke-width="1.200"/></svg>
<svg class="abs" style="left:927.0px;top:96px;overflow:visible" width="24" height="24" viewBox="0 0 24 24"><ellipse cx="5.2" cy="11.5" rx="3.7" ry="7.5" fill="none" stroke="#3a3a3a" stroke-width="1.100"/><ellipse cx="18.8" cy="11.5" rx="3.7" ry="7.5" fill="none" stroke="#3a3a3a" stroke-width="1.100"/><rect x="11" y="18.300" width="1.500" height="1.500" fill="#3a3a3a"/></svg>
<svg class="abs" style="left:960.0px;top:96px;overflow:visible" width="24" height="24" viewBox="0 0 24 24"><rect x="2.500" y="4.500" width="19" height="17" fill="#fff" stroke="#3a3a3a" stroke-width="1.200"/><path d="M6 2V6M18 2V6" stroke="#3a3a3a" stroke-width="1.600"/><rect x="7" y="3.500" width="10" height="2.500" fill="#3a3a3a"/><text x="8" y="19" font-family="Liberation Sans" font-size="12" fill="#3a3a3a">7</text></svg>
<svg class="abs" style="left:1000.5px;top:96px;overflow:visible" width="24" height="24" viewBox="0 0 24 24"><rect x="0.500" y="18.300" width="1.500" height="1.500" fill="#3a3a3a"/><ellipse cx="7" cy="11" rx="3.6" ry="7.5" fill="none" stroke="#3a3a3a" stroke-width="1.100"/><ellipse cx="18" cy="11" rx="3.6" ry="7.5" fill="none" stroke="#3a3a3a" stroke-width="1.100"/><rect x="14" y="15" width="10" height="8" fill="#f3f3f3"/><path d="M14.500 19.500H22.500M18.500 15.500V23.500" stroke="#2a8ad4" stroke-width="1.300"/></svg>
<svg class="abs" style="left:1033.5px;top:96px;overflow:visible" width="24" height="24" viewBox="0 0 24 24"><rect x="0.500" y="18.300" width="1.500" height="1.500" fill="#3a3a3a"/><ellipse cx="7" cy="11" rx="3.6" ry="7.5" fill="none" stroke="#3a3a3a" stroke-width="1.100"/><ellipse cx="18" cy="11" rx="3.6" ry="7.5" fill="none" stroke="#3a3a3a" stroke-width="1.100"/><rect x="14" y="15" width="10" height="8" fill="#f3f3f3"/><path d="M14.500 15L23 23M23 15L14.500 23" stroke="#e5484d" stroke-width="1.300"/></svg>
<svg class="abs" style="left:1075.0px;top:96px;overflow:visible" width="24" height="24" viewBox="0 0 24 24"><path d="M4 1.500H22M12 6.500H22M12 11.500H22M12 16.500H22M4 21.500H22" stroke="#3a3a3a" stroke-width="1.100"/><path d="M1 11.500H9M5.500 8L9 11.500L5.500 15" fill="none" stroke="#2a8ad4" stroke-width="1.200"/></svg>
<svg class="abs" style="left:1108.0px;top:96px;overflow:visible" width="24" height="24" viewBox="0 0 24 24"><path d="M4 1.500H22M12 6.500H22M12 11.500H22M12 16.500H22M4 21.500H22" stroke="#3a3a3a" stroke-width="1.100"/><path d="M9 11.500H1M4.500 8L1 11.500L4.500 15" fill="none" stroke="#2a8ad4" stroke-width="1.200"/></svg>
<svg class="abs" style="left:1146.5px;top:96px;overflow:visible" width="24" height="24" viewBox="0 0 24 24"><rect x="2.500" y="3.500" width="18" height="17.500" fill="#fff" stroke="#3a3a3a" stroke-width="1.200"/><path d="M11.500 3.500V21M2.500 12.500H20.500" stroke="#3a3a3a" stroke-width="1.100"/><path d="M2 21.300H21" stroke="#f29b4a" stroke-width="1"/></svg>
<svg class="abs" style="left:1191.0px;top:96px;overflow:visible" width="24" height="24" viewBox="0 0 24 24"><path d="M3 3H21" stroke="#3a3a3a" stroke-width="2.400"/><path d="M3 8.500H21" stroke="#3a3a3a" stroke-width="1.800"/><path d="M3 13H21" stroke="#3a3a3a" stroke-width="1" stroke-dasharray="4 1.500"/><path d="M3 16.500H21" stroke="#3a3a3a" stroke-width="1" stroke-dasharray="1.800 1.300"/><path d="M3 20.500H21" stroke="#3a3a3a" stroke-width="2"/></svg>
<svg class="abs" style="left:1235.0px;top:96px;overflow:visible" width="24" height="24" viewBox="0 0 24 24"><rect x="2.500" y="2.500" width="19" height="15" fill="#fff" stroke="#4a9ad8" stroke-width="1.200"/><rect x="4.500" y="4.500" width="15" height="11" fill="#fff" stroke="#3a3a3a" stroke-width="1"/><rect x="0" y="18" width="24" height="6" fill="#2a6099"/></svg>
<svg class="abs" style="left:1287.5px;top:96px;overflow:visible" width="24" height="24" viewBox="0 0 24 24"><rect x="1.500" y="2.500" width="18" height="16" fill="#fff" stroke="#3a3a3a" stroke-width="1"/><rect x="6" y="3" width="10" height="3.500" fill="#8fd19e"/><rect x="6" y="7" width="10" height="3.500" fill="#f39a9a"/><rect x="6" y="11" width="5" height="3.500" fill="#8fd19e"/><rect x="6" y="15" width="4" height="3" fill="#f39a9a"/>
<path d="M5.500 2.500V18.500M16 2.500V18.500M1.500 6.700H19.500M1.500 10.700H19.500M1.500 14.700H19.500" stroke="#3a3a3a" stroke-width="0.800"/>
<rect x="10.500" y="11.500" width="11" height="11" rx="1" fill="#fff" stroke="#3a3a3a" stroke-width="1.200"/><path d="M12.500 15.500H19.500M12.500 18.500H19.500M18 13.500L14 20.500" stroke="#3a3a3a" stroke-width="1"/></svg>
<div class="t" style="left:277.7px;top:98.6px;font-size:16.5px;line-height:20px;letter-spacing:2.478px;font-weight:bold;color:#333;-webkit-text-stroke:0.22px #333;">Ж</div>
<div class="t" style="left:313.5px;top:98.6px;font-size:16.5px;line-height:20px;letter-spacing:2.266px;font-style:italic;color:#333;-webkit-text-stroke:0.22px #333;">К</div>
<div class="t" style="left:344.5px;top:98.6px;font-size:16.5px;line-height:20px;letter-spacing:0.5px;color:#333;-webkit-text-stroke:0.22px #333;">Ч</div>
<div class="abs" style="left:344px;top:116px;width:13px;height:1px;background:#2a8ad4;"></div>
<div class="t" style="left:394.8px;top:94.1px;font-size:20px;line-height:24px;letter-spacing:1.856px;color:#333;transform:scaleX(0.94);transform-origin:0 50%;">A</div>
<div class="abs" style="left:390px;top:114px;width:24px;height:6px;background:#c9211e;"></div>
<svg class="abs" style="left:434px;top:96px;overflow:visible" width="24" height="24" viewBox="0 0 24 24">
<path d="M3.100 16V7.800Q3.100 6.200 4.800 6.200H8.500L5.600 9.200V13.500Z" fill="#1c66ad"/>
<path d="M6.900 8.600L15 5.300L18.800 13.500L11.100 17.500Z" fill="#fff" stroke="#3a3a3a" stroke-width="1" stroke-linejoin="round"/>
<path d="M12.400 10V4.500Q12.600 1.800 14.900 1.800Q17.200 1.800 17 4.800L16.600 8" fill="none" stroke="#3a3a3a" stroke-width="1"/>
</svg><div class="abs" style="left:434px;top:114px;width:24px;height:6px;background:#ffff00;"></div>
<svg class="abs" style="left:369.2px;top:107.5px" width="8" height="5" viewBox="0 0 8 5"><path d="M0.500 0.500H7.500L4 4.500Z" fill="#000"/></svg>
<svg class="abs" style="left:421.1px;top:107.5px" width="8" height="5" viewBox="0 0 8 5"><path d="M0.500 0.500H7.500L4 4.500Z" fill="#000"/></svg>
<svg class="abs" style="left:465.0px;top:107.5px" width="8" height="5" viewBox="0 0 8 5"><path d="M0.500 0.500H7.500L4 4.500Z" fill="#000"/></svg>
<svg class="abs" style="left:879.2px;top:107.5px" width="8" height="5" viewBox="0 0 8 5"><path d="M0.500 0.500H7.500L4 4.500Z" fill="#000"/></svg>
<svg class="abs" style="left:1178.4px;top:107.5px" width="8" height="5" viewBox="0 0 8 5"><path d="M0.500 0.500H7.500L4 4.500Z" fill="#000"/></svg>
<svg class="abs" style="left:1222.2px;top:107.5px" width="8" height="5" viewBox="0 0 8 5"><path d="M0.500 0.500H7.500L4 4.500Z" fill="#000"/></svg>
<svg class="abs" style="left:1266.0px;top:107.5px" width="8" height="5" viewBox="0 0 8 5"><path d="M0.500 0.500H7.500L4 4.500Z" fill="#000"/></svg>
<svg class="abs" style="left:1318.1px;top:107.5px" width="8" height="5" viewBox="0 0 8 5"><path d="M0.500 0.500H7.500L4 4.500Z" fill="#000"/></svg>
<div class="abs" style="left:264px;top:99px;width:1px;height:18px;background:#c9c9c9;"></div>
<div class="abs" style="left:382px;top:99px;width:1px;height:18px;background:#c9c9c9;"></div>
<div class="abs" style="left:478px;top:99px;width:1px;height:18px;background:#c9c9c9;"></div>
<div class="abs" style="left:585px;top:99px;width:1px;height:18px;background:#c9c9c9;"></div>
<div class="abs" style="left:692px;top:99px;width:1px;height:18px;background:#c9c9c9;"></div>
<div class="abs" style="left:733px;top:99px;width:1px;height:18px;background:#c9c9c9;"></div>
<div class="abs" style="left:840px;top:99px;width:1px;height:18px;background:#c9c9c9;"></div>
<div class="abs" style="left:991px;top:99px;width:1px;height:18px;background:#c9c9c9;"></div>
<div class="abs" style="left:1065px;top:99px;width:1px;height:18px;background:#c9c9c9;"></div>
<div class="abs" style="left:1139px;top:99px;width:1px;height:18px;background:#c9c9c9;"></div>
<div class="abs" style="left:1279px;top:99px;width:1px;height:18px;background:#c9c9c9;"></div>

<!-- formulabar -->
<div class="abs" style="left:0px;top:128px;width:1318px;height:35px;background:#efefef;"></div>
<div class="abs" style="left:4px;top:131px;width:144px;height:24px;background:#fff;border:1px solid #7a7a7a;"></div><div class="abs" style="left:130px;top:132px;width:17px;height:22px;background:#d2d2d2;border-left:1px solid #adadad;"></div><svg class="abs" style="left:134px;top:140.500px" width="10" height="6" viewBox="0 0 10 6"><path d="M1 0.800L5 4.800L9 0.800" fill="none" stroke="#444" stroke-width="1.100"/></svg><div class="t" style="left:6.8px;top:137.0px;font-size:12px;line-height:14px;letter-spacing:-0.272px;-webkit-text-stroke:0.22px #000;">C19</div>
<div class="abs" style="left:151px;top:136px;width:1px;height:14px;background:#c9c9c9;"></div>
<svg class="abs" style="left:0;top:0;overflow:visible" width="1" height="1"><g fill="none" stroke="#3a8fcc" stroke-linecap="round"><path stroke-width="1.500" d="M170.800 137C170.400 135.200 168.400 135 167.700 137.200L165.100 148C164.600 150.300 163.200 151.200 161.900 149.900"/><path stroke-width="1.200" d="M164.800 139.600H169.200"/><path stroke-width="1.700" d="M169.800 143.900C171 143.300 171.600 143.800 172 145L173.600 149.200C174 150.400 174.800 150.900 175.800 150.300"/><path stroke-width="1.150" d="M176.100 143.700C175 143.300 174.200 144 173 145.600L171.500 148.200C170.600 149.800 169.900 150.800 168.900 150.400"/></g></svg><svg class="abs" style="left:185px;top:132px" width="14" height="18" viewBox="0 0 14 18"><path d="M12.500 4.500V1.500H1.700L6.600 9L1.700 16.500H12.500V12" fill="none" stroke="#333" stroke-width="1.150"/></svg><svg class="abs" style="left:207.500px;top:141px" width="8" height="5" viewBox="0 0 8 5"><path d="M0.500 0.500H7.500L4 4.500Z" fill="#000"/></svg><div class="abs" style="left:224px;top:137px;width:12px;height:2px;background:#222;"></div>
<div class="abs" style="left:224px;top:143px;width:12px;height:2px;background:#222;"></div>
<div class="abs" style="left:242px;top:132px;width:1044px;height:23px;background:#fff;border:1px solid #a6a6a6;"></div><svg class="abs" style="left:1293px;top:138.500px" width="14" height="8" viewBox="0 0 14 8"><path d="M0.300 0.300H13.700L7 7.700Z" fill="#000"/></svg>
<!-- grid -->
<div class="abs" style="left:33px;top:182px;width:1268px;height:486px;background:#fff;"></div>
<div class="abs" style="left:0px;top:159px;width:1301px;height:23px;background:#efefef;"></div>
<div class="abs" style="left:0px;top:182px;width:33px;height:486px;background:#efefef;"></div>
<div class="abs" style="left:213px;top:182px;width:1px;height:486px;background:#c8c8c8;"></div>
<div class="abs" style="left:334px;top:182px;width:1px;height:486px;background:#c8c8c8;"></div>
<div class="abs" style="left:455px;top:182px;width:1px;height:486px;background:#c8c8c8;"></div>
<div class="abs" style="left:700px;top:182px;width:1px;height:486px;background:#c8c8c8;"></div>
<div class="abs" style="left:736px;top:182px;width:1px;height:486px;background:#c8c8c8;"></div>
<div class="abs" style="left:818px;top:182px;width:1px;height:486px;background:#c8c8c8;"></div>
<div class="abs" style="left:900px;top:182px;width:1px;height:486px;background:#c8c8c8;"></div>
<div class="abs" style="left:982px;top:182px;width:1px;height:486px;background:#c8c8c8;"></div>
<div class="abs" style="left:1064px;top:182px;width:1px;height:486px;background:#c8c8c8;"></div>
<div class="abs" style="left:1146px;top:182px;width:1px;height:486px;background:#c8c8c8;"></div>
<div class="abs" style="left:1228px;top:182px;width:1px;height:486px;background:#c8c8c8;"></div>
<div class="abs" style="left:33px;top:219px;width:1268px;height:1px;background:#c8c8c8;"></div>
<div class="abs" style="left:33px;top:236px;width:1268px;height:1px;background:#c8c8c8;"></div>
<div class="abs" style="left:33px;top:253px;width:1268px;height:1px;background:#c8c8c8;"></div>
<div class="abs" style="left:33px;top:270px;width:1268px;height:1px;background:#c8c8c8;"></div>
<div class="abs" style="left:33px;top:308px;width:1268px;height:1px;background:#c8c8c8;"></div>
<div class="abs" style="left:33px;top:339px;width:1268px;height:1px;background:#c8c8c8;"></div>
<div class="abs" style="left:33px;top:356px;width:1268px;height:1px;background:#c8c8c8;"></div>
<div class="abs" style="left:33px;top:373px;width:1268px;height:1px;background:#c8c8c8;"></div>
<div class="abs" style="left:33px;top:390px;width:1268px;height:1px;background:#c8c8c8;"></div>
<div class="abs" style="left:33px;top:407px;width:1268px;height:1px;background:#c8c8c8;"></div>
<div class="abs" style="left:33px;top:424px;width:1268px;height:1px;background:#c8c8c8;"></div>
<div class="abs" style="left:33px;top:441px;width:1268px;height:1px;background:#c8c8c8;"></div>
<div class="abs" style="left:33px;top:458px;width:1268px;height:1px;background:#c8c8c8;"></div>
<div class="abs" style="left:33px;top:475px;width:1268px;height:1px;background:#c8c8c8;"></div>
<div class="abs" style="left:33px;top:492px;width:1268px;height:1px;background:#c8c8c8;"></div>
<div class="abs" style="left:33px;top:509px;width:1268px;height:1px;background:#c8c8c8;"></div>
<div class="abs" style="left:33px;top:526px;width:1268px;height:1px;background:#c8c8c8;"></div>
<div class="abs" style="left:33px;top:543px;width:1268px;height:1px;background:#c8c8c8;"></div>
<div class="abs" style="left:33px;top:560px;width:1268px;height:1px;background:#c8c8c8;"></div>
<div class="abs" style="left:33px;top:577px;width:1268px;height:1px;background:#c8c8c8;"></div>
<div class="abs" style="left:33px;top:594px;width:1268px;height:1px;background:#c8c8c8;"></div>
<div class="abs" style="left:33px;top:611px;width:1268px;height:1px;background:#c8c8c8;"></div>
<div class="abs" style="left:33px;top:628px;width:1268px;height:1px;background:#c8c8c8;"></div>
<div class="abs" style="left:33px;top:645px;width:1268px;height:1px;background:#c8c8c8;"></div>
<div class="abs" style="left:33px;top:662px;width:1268px;height:1px;background:#c8c8c8;"></div>
<div class="abs" style="left:334px;top:163px;width:122px;height:19px;background:#0078d7;"></div>
<div class="abs" style="left:32px;top:163px;width:1px;height:19px;background:#808080;"></div>
<div class="abs" style="left:213px;top:163px;width:1px;height:19px;background:#808080;"></div>
<div class="abs" style="left:700px;top:163px;width:1px;height:19px;background:#808080;"></div>
<div class="abs" style="left:736px;top:163px;width:1px;height:19px;background:#808080;"></div>
<div class="abs" style="left:818px;top:163px;width:1px;height:19px;background:#808080;"></div>
<div class="abs" style="left:900px;top:163px;width:1px;height:19px;background:#808080;"></div>
<div class="abs" style="left:982px;top:163px;width:1px;height:19px;background:#808080;"></div>
<div class="abs" style="left:1064px;top:163px;width:1px;height:19px;background:#808080;"></div>
<div class="abs" style="left:1146px;top:163px;width:1px;height:19px;background:#808080;"></div>
<div class="abs" style="left:1228px;top:163px;width:1px;height:19px;background:#808080;"></div>
<div class="abs" style="left:0px;top:181px;width:334px;height:1px;background:#808080;"></div>
<div class="abs" style="left:456px;top:181px;width:845px;height:1px;background:#808080;"></div>
<div class="abs" style="left:0px;top:543px;width:33px;height:18px;background:#0078d7;"></div>
<div class="abs" style="left:0px;top:219px;width:32px;height:1px;background:#808080;"></div>
<div class="abs" style="left:0px;top:236px;width:32px;height:1px;background:#808080;"></div>
<div class="abs" style="left:0px;top:253px;width:32px;height:1px;background:#808080;"></div>
<div class="abs" style="left:0px;top:270px;width:32px;height:1px;background:#808080;"></div>
<div class="abs" style="left:0px;top:308px;width:32px;height:1px;background:#808080;"></div>
<div class="abs" style="left:0px;top:339px;width:32px;height:1px;background:#808080;"></div>
<div class="abs" style="left:0px;top:356px;width:32px;height:1px;background:#808080;"></div>
<div class="abs" style="left:0px;top:373px;width:32px;height:1px;background:#808080;"></div>
<div class="abs" style="left:0px;top:390px;width:32px;height:1px;background:#808080;"></div>
<div class="abs" style="left:0px;top:407px;width:32px;height:1px;background:#808080;"></div>
<div class="abs" style="left:0px;top:424px;width:32px;height:1px;background:#808080;"></div>
<div class="abs" style="left:0px;top:441px;width:32px;height:1px;background:#808080;"></div>
<div class="abs" style="left:0px;top:458px;width:32px;height:1px;background:#808080;"></div>
<div class="abs" style="left:0px;top:475px;width:32px;height:1px;background:#808080;"></div>
<div class="abs" style="left:0px;top:492px;width:32px;height:1px;background:#808080;"></div>
<div class="abs" style="left:0px;top:509px;width:32px;height:1px;background:#808080;"></div>
<div class="abs" style="left:0px;top:526px;width:32px;height:1px;background:#808080;"></div>
<div class="abs" style="left:0px;top:577px;width:32px;height:1px;background:#808080;"></div>
<div class="abs" style="left:0px;top:594px;width:32px;height:1px;background:#808080;"></div>
<div class="abs" style="left:0px;top:611px;width:32px;height:1px;background:#808080;"></div>
<div class="abs" style="left:0px;top:628px;width:32px;height:1px;background:#808080;"></div>
<div class="abs" style="left:0px;top:645px;width:32px;height:1px;background:#808080;"></div>
<div class="abs" style="left:0px;top:662px;width:32px;height:1px;background:#808080;"></div>
<div class="abs" style="left:32px;top:163px;width:1px;height:505px;background:#808080;"></div>
<div class="abs" style="left:0px;top:180px;width:1301px;height:1px;background:#f9f9f9;"></div>
<div class="abs" style="left:333px;top:163px;width:1px;height:18px;background:#f7fbff;"></div>
<div class="abs" style="left:456px;top:163px;width:1px;height:18px;background:#f7fbff;"></div>
<div class="abs" style="left:334px;top:163px;width:122px;height:18px;background:#0078d7;"></div>
<div class="abs" style="left:334px;top:181px;width:122px;height:1px;background:#005ba1;"></div>
<div class="abs" style="left:0px;top:542px;width:32px;height:1px;background:#e6f4ff;"></div>
<div class="abs" style="left:0px;top:561px;width:32px;height:1px;background:#e6f4ff;"></div>
<div class="abs" style="left:0px;top:543px;width:32px;height:18px;background:#0078d7;"></div>
<div class="abs" style="left:32px;top:543px;width:1px;height:18px;background:#005ba1;"></div>
<div class="t" style="left:119.5px;top:166.1px;font-size:12.4px;line-height:15px;letter-spacing:0.734px;-webkit-text-stroke:0.22px #000;">A</div>
<div class="t" style="left:271.0px;top:166.1px;font-size:12.4px;line-height:15px;letter-spacing:-0.266px;-webkit-text-stroke:0.22px #000;">B</div>
<div class="t" style="left:392.0px;top:166.1px;font-size:12.4px;line-height:15px;letter-spacing:-0.953px;color:#fff;-webkit-text-stroke:0.22px #fff;">C</div>
<div class="t" style="left:574.5px;top:166.1px;font-size:12.4px;line-height:15px;letter-spacing:0.047px;-webkit-text-stroke:0.22px #000;">D</div>
<div class="t" style="left:716.0px;top:166.1px;font-size:12.4px;line-height:15px;letter-spacing:-1.266px;-webkit-text-stroke:0.22px #000;">E</div>
<div class="t" style="left:775.0px;top:166.1px;font-size:12.4px;line-height:15px;letter-spacing:-0.578px;-webkit-text-stroke:0.22px #000;">F</div>
<div class="t" style="left:856.0px;top:166.1px;font-size:12.4px;line-height:15px;letter-spacing:-0.641px;-webkit-text-stroke:0.22px #000;">G</div>
<div class="t" style="left:938.0px;top:166.1px;font-size:12.4px;line-height:15px;letter-spacing:0.047px;-webkit-text-stroke:0.22px #000;">H</div>
<div class="t" style="left:1023.0px;top:166.1px;font-size:12.4px;line-height:15px;letter-spacing:-0.453px;-webkit-text-stroke:0.22px #000;">I</div>
<div class="t" style="left:1104.0px;top:166.1px;font-size:12.4px;line-height:15px;letter-spacing:-1.203px;-webkit-text-stroke:0.22px #000;">J</div>
<div class="t" style="left:1184.5px;top:166.1px;font-size:12.4px;line-height:15px;letter-spacing:-0.266px;-webkit-text-stroke:0.22px #000;">K</div>
<div class="t" style="left:1266.5px;top:166.1px;font-size:12.4px;line-height:15px;letter-spacing:-0.906px;-webkit-text-stroke:0.22px #000;">L</div>
<div class="t" style="left:12.9px;top:193.7px;font-size:13.2px;line-height:16px;letter-spacing:0.02px;-webkit-text-stroke:0.22px #000;transform:scaleX(0.88);transform-origin:0 50%;">1</div>
<div class="t" style="left:12.9px;top:221.2px;font-size:13.2px;line-height:16px;letter-spacing:0.02px;-webkit-text-stroke:0.22px #000;transform:scaleX(0.88);transform-origin:0 50%;">2</div>
<div class="t" style="left:12.9px;top:238.2px;font-size:13.2px;line-height:16px;letter-spacing:0.02px;-webkit-text-stroke:0.22px #000;transform:scaleX(0.88);transform-origin:0 50%;">3</div>
<div class="t" style="left:12.9px;top:255.2px;font-size:13.2px;line-height:16px;letter-spacing:0.02px;-webkit-text-stroke:0.22px #000;transform:scaleX(0.88);transform-origin:0 50%;">4</div>
<div class="t" style="left:12.9px;top:282.7px;font-size:13.2px;line-height:16px;letter-spacing:0.02px;-webkit-text-stroke:0.22px #000;transform:scaleX(0.88);transform-origin:0 50%;">5</div>
<div class="t" style="left:12.9px;top:317.2px;font-size:13.2px;line-height:16px;letter-spacing:0.02px;-webkit-text-stroke:0.22px #000;transform:scaleX(0.88);transform-origin:0 50%;">6</div>
<div class="t" style="left:12.9px;top:341.2px;font-size:13.2px;line-height:16px;letter-spacing:0.02px;-webkit-text-stroke:0.22px #000;transform:scaleX(0.88);transform-origin:0 50%;">7</div>
<div class="t" style="left:12.9px;top:358.2px;font-size:13.2px;line-height:16px;letter-spacing:0.02px;-webkit-text-stroke:0.22px #000;transform:scaleX(0.88);transform-origin:0 50%;">8</div>
<div class="t" style="left:12.9px;top:375.2px;font-size:13.2px;line-height:16px;letter-spacing:0.02px;-webkit-text-stroke:0.22px #000;transform:scaleX(0.88);transform-origin:0 50%;">9</div>
<div class="t" style="left:9.4px;top:392.2px;font-size:13.2px;line-height:16px;letter-spacing:0.323px;-webkit-text-stroke:0.22px #000;transform:scaleX(0.88);transform-origin:0 50%;">10</div>
<div class="t" style="left:9.4px;top:409.2px;font-size:13.2px;line-height:16px;letter-spacing:0.808px;-webkit-text-stroke:0.22px #000;transform:scaleX(0.88);transform-origin:0 50%;">11</div>
<div class="t" style="left:9.4px;top:426.2px;font-size:13.2px;line-height:16px;letter-spacing:0.323px;-webkit-text-stroke:0.22px #000;transform:scaleX(0.88);transform-origin:0 50%;">12</div>
<div class="t" style="left:9.4px;top:443.2px;font-size:13.2px;line-height:16px;letter-spacing:0.323px;-webkit-text-stroke:0.22px #000;transform:scaleX(0.88);transform-origin:0 50%;">13</div>
<div class="t" style="left:9.4px;top:460.2px;font-size:13.2px;line-height:16px;letter-spacing:0.323px;-webkit-text-stroke:0.22px #000;transform:scaleX(0.88);transform-origin:0 50%;">14</div>
<div class="t" style="left:9.4px;top:477.2px;font-size:13.2px;line-height:16px;letter-spacing:0.323px;-webkit-text-stroke:0.22px #000;transform:scaleX(0.88);transform-origin:0 50%;">15</div>
<div class="t" style="left:9.4px;top:494.2px;font-size:13.2px;line-height:16px;letter-spacing:0.323px;-webkit-text-stroke:0.22px #000;transform:scaleX(0.88);transform-origin:0 50%;">16</div>
<div class="t" style="left:9.4px;top:511.2px;font-size:13.2px;line-height:16px;letter-spacing:0.323px;-webkit-text-stroke:0.22px #000;transform:scaleX(0.88);transform-origin:0 50%;">17</div>
<div class="t" style="left:9.4px;top:528.2px;font-size:13.2px;line-height:16px;letter-spacing:0.323px;-webkit-text-stroke:0.22px #000;transform:scaleX(0.88);transform-origin:0 50%;">18</div>
<div class="t" style="left:9.4px;top:545.2px;font-size:13.2px;line-height:16px;letter-spacing:0.664px;font-weight:bold;color:#fff;transform:scaleX(0.88);transform-origin:0 50%;">19</div>
<div class="t" style="left:9.4px;top:562.2px;font-size:13.2px;line-height:16px;letter-spacing:0.323px;-webkit-text-stroke:0.22px #000;transform:scaleX(0.88);transform-origin:0 50%;">20</div>
<div class="t" style="left:9.4px;top:579.2px;font-size:13.2px;line-height:16px;letter-spacing:0.323px;-webkit-text-stroke:0.22px #000;transform:scaleX(0.88);transform-origin:0 50%;">21</div>
<div class="t" style="left:9.4px;top:596.2px;font-size:13.2px;line-height:16px;letter-spacing:0.323px;-webkit-text-stroke:0.22px #000;transform:scaleX(0.88);transform-origin:0 50%;">22</div>
<div class="t" style="left:9.4px;top:613.2px;font-size:13.2px;line-height:16px;letter-spacing:0.323px;-webkit-text-stroke:0.22px #000;transform:scaleX(0.88);transform-origin:0 50%;">23</div>
<div class="t" style="left:9.4px;top:630.2px;font-size:13.2px;line-height:16px;letter-spacing:0.323px;-webkit-text-stroke:0.22px #000;transform:scaleX(0.88);transform-origin:0 50%;">24</div>
<div class="t" style="left:9.4px;top:647.2px;font-size:13.2px;line-height:16px;letter-spacing:0.323px;-webkit-text-stroke:0.22px #000;transform:scaleX(0.88);transform-origin:0 50%;">25</div>

<!-- grid2 -->
<div class="abs" style="left:33px;top:182px;width:667px;height:37px;background:#eeeeee;"></div>
<div class="abs" style="left:33px;top:220px;width:667px;height:16px;background:#eeeeee;"></div>
<div class="abs" style="left:33px;top:237px;width:180px;height:33px;background:#eeeeee;"></div>
<div class="abs" style="left:214px;top:237px;width:241px;height:33px;background:#afd095;"></div>
<div class="abs" style="left:33px;top:271px;width:667px;height:85px;background:#eeeeee;"></div>
<div class="abs" style="left:33px;top:357px;width:180px;height:84px;background:#eeeeee;"></div>
<div class="abs" style="left:214px;top:357px;width:120px;height:84px;background:#afd095;"></div>
<div class="abs" style="left:33px;top:442px;width:667px;height:16px;background:#eeeeee;"></div>
<div class="abs" style="left:33px;top:459px;width:180px;height:84px;background:#eeeeee;"></div>
<div class="abs" style="left:214px;top:459px;width:120px;height:84px;background:#afd095;"></div>
<div class="abs" style="left:33px;top:181px;width:301px;height:1px;background:#555;"></div>
<div class="abs" style="left:456px;top:181px;width:245px;height:1px;background:#555;"></div>
<div class="abs" style="left:33px;top:219px;width:668px;height:1px;background:#000;"></div>
<div class="abs" style="left:33px;top:236px;width:668px;height:1px;background:#000;"></div>
<div class="abs" style="left:33px;top:253px;width:668px;height:1px;background:#000;"></div>
<div class="abs" style="left:33px;top:270px;width:668px;height:1px;background:#000;"></div>
<div class="abs" style="left:33px;top:308px;width:668px;height:1px;background:#000;"></div>
<div class="abs" style="left:33px;top:339px;width:668px;height:1px;background:#000;"></div>
<div class="abs" style="left:33px;top:356px;width:668px;height:1px;background:#000;"></div>
<div class="abs" style="left:33px;top:373px;width:668px;height:1px;background:#000;"></div>
<div class="abs" style="left:33px;top:390px;width:668px;height:1px;background:#000;"></div>
<div class="abs" style="left:33px;top:407px;width:668px;height:1px;background:#000;"></div>
<div class="abs" style="left:33px;top:424px;width:668px;height:1px;background:#000;"></div>
<div class="abs" style="left:33px;top:441px;width:668px;height:1px;background:#000;"></div>
<div class="abs" style="left:33px;top:458px;width:668px;height:1px;background:#000;"></div>
<div class="abs" style="left:33px;top:475px;width:668px;height:1px;background:#000;"></div>
<div class="abs" style="left:33px;top:492px;width:668px;height:1px;background:#000;"></div>
<div class="abs" style="left:33px;top:509px;width:668px;height:1px;background:#000;"></div>
<div class="abs" style="left:33px;top:526px;width:668px;height:1px;background:#000;"></div>
<div class="abs" style="left:33px;top:543px;width:668px;height:1px;background:#000;"></div>
<div class="abs" style="left:700px;top:181px;width:1px;height:363px;background:#000;"></div>
<div class="abs" style="left:32px;top:181px;width:1px;height:362px;background:#4a4a4a;"></div>
<div class="abs" style="left:213px;top:219px;width:1px;height:52px;background:#000;"></div>
<div class="abs" style="left:455px;top:219px;width:1px;height:52px;background:#000;"></div>
<div class="abs" style="left:213px;top:308px;width:1px;height:32px;background:#000;"></div>
<div class="abs" style="left:334px;top:308px;width:1px;height:32px;background:#000;"></div>
<div class="abs" style="left:455px;top:308px;width:1px;height:32px;background:#000;"></div>
<div class="abs" style="left:213px;top:356px;width:1px;height:86px;background:#000;"></div>
<div class="abs" style="left:334px;top:356px;width:1px;height:86px;background:#000;"></div>
<div class="abs" style="left:455px;top:356px;width:1px;height:86px;background:#000;"></div>
<div class="abs" style="left:213px;top:458px;width:1px;height:86px;background:#000;"></div>
<div class="abs" style="left:334px;top:458px;width:1px;height:86px;background:#000;"></div>
<div class="abs" style="left:455px;top:458px;width:1px;height:86px;background:#000;"></div>
<div class="t" style="left:294.45px;top:190.86px;font-size:16px;line-height:19px;letter-spacing:0.194px;font-weight:bold;">Данные принтера</div>
<div class="t" style="left:91.95px;top:220.60px;font-size:13px;line-height:16px;letter-spacing:-0.054px;font-weight:bold;">Параметр</div>
<div class="t" style="left:304.12px;top:220.60px;font-size:13px;line-height:16px;font-weight:bold;">Значение</div>
<div class="t" style="left:535.98px;top:220.60px;font-size:13px;line-height:16px;font-weight:bold;">Размерность</div>
<div class="t" style="left:68.15px;top:237.60px;font-size:13px;line-height:16px;letter-spacing:-0.041px;font-weight:bold;">Масштаб модели</div>
<div class="t" style="left:308.84px;top:237.60px;font-size:13px;line-height:16px;">100,00%</div>
<div class="t" style="left:575.80px;top:237.53px;font-size:13.2px;line-height:16px;">-</div>
<div class="t" style="left:75.20px;top:254.60px;font-size:13px;line-height:16px;letter-spacing:-0.015px;font-weight:bold;">Ширина линии</div>
<div class="t" style="left:325.46px;top:254.60px;font-size:13px;line-height:16px;">0,5</div>
<div class="t" style="left:568.93px;top:254.53px;font-size:13.2px;line-height:16px;">мм</div>
<div class="t" style="left:170.85px;top:279.86px;font-size:16px;line-height:19px;font-weight:bold;">Значения, снимаемые с модели (в миллиметрах)</div>
<div class="t" style="left:91.95px;top:315.50px;font-size:13px;line-height:16px;letter-spacing:-0.054px;font-weight:bold;">Параметр</div>
<div class="t" style="left:219.15px;top:309.30px;font-size:13px;line-height:16px;letter-spacing:-0.017px;font-weight:bold;">Первоначальная</div>
<div class="t" style="left:252.35px;top:324.20px;font-size:13px;line-height:16px;letter-spacing:-0.101px;font-weight:bold;">печать</div>
<div class="t" style="left:351.20px;top:309.30px;font-size:13px;line-height:16px;letter-spacing:0.103px;font-weight:bold;">Проверочная</div>
<div class="t" style="left:373.30px;top:324.20px;font-size:13px;line-height:16px;letter-spacing:-0.051px;font-weight:bold;">печать</div>
<div class="t" style="left:546.17px;top:315.50px;font-size:13px;line-height:16px;font-weight:bold;">Описание</div>
<div class="t" style="left:347.50px;top:340.60px;font-size:13px;line-height:16px;letter-spacing:0.075px;font-weight:bold;">Ось X</div>
<svg class="abs" style="left:0;top:0;overflow:visible" width="1" height="1"><path d="M373.1 356.5 L377.1 353.8 L381.1 356.5 L385.0 353.8" fill="none" stroke="#e02020" stroke-width="1.05" opacity="0.95"/></svg>
<div class="t" style="left:347.50px;top:442.60px;font-size:13px;line-height:16px;letter-spacing:0.075px;font-weight:bold;">Ось Y</div>
<svg class="abs" style="left:0;top:0;overflow:visible" width="1" height="1"><path d="M373.1 458.5 L377.1 455.8 L381.1 458.5 L385.0 455.8" fill="none" stroke="#e02020" stroke-width="1.05" opacity="0.95"/></svg>
<div class="t" style="left:108.19px;top:357.60px;font-size:13px;line-height:16px;font-weight:bold;">XWS</div>
<svg class="abs" style="left:0;top:0;overflow:visible" width="1" height="1"><path d="M108.2 373.5 L112.2 370.8 L116.2 373.5 L120.2 370.8 L124.2 373.5 L128.2 370.8 L132.2 373.5 L136.2 370.8 L137.3 373.5" fill="none" stroke="#e02020" stroke-width="1.05" opacity="0.95"/></svg>
<div class="t" style="left:261.34px;top:357.60px;font-size:13px;line-height:16px;">14,9</div>
<div class="t" style="left:387.77px;top:357.60px;font-size:13px;line-height:16px;">15</div>
<div class="t" style="left:467.69px;top:357.53px;font-size:13.2px;line-height:16px;">Ширина короткого луча вдоль оси X</div>
<svg class="abs" style="left:0;top:0;overflow:visible" width="1" height="1"><path d="M675.8 373.5 L679.8 370.8 L683.8 373.5 L687.8 370.8" fill="none" stroke="#e02020" stroke-width="1.05" opacity="0.95"/></svg>
<div class="t" style="left:108.55px;top:374.60px;font-size:13px;line-height:16px;font-weight:bold;">XWL</div>
<svg class="abs" style="left:0;top:0;overflow:visible" width="1" height="1"><path d="M108.6 390.5 L112.6 387.8 L116.6 390.5 L120.6 387.8 L124.6 390.5 L128.6 387.8 L132.6 390.5 L136.6 387.8 L136.9 390.5" fill="none" stroke="#e02020" stroke-width="1.05" opacity="0.95"/></svg>
<div class="t" style="left:261.34px;top:374.60px;font-size:13px;line-height:16px;">14,9</div>
<div class="t" style="left:387.77px;top:374.60px;font-size:13px;line-height:16px;">15</div>
<div class="t" style="left:468.82px;top:374.53px;font-size:13.2px;line-height:16px;">Ширина длинного луча вдоль оси X</div>
<svg class="abs" style="left:0;top:0;overflow:visible" width="1" height="1"><path d="M674.7 390.5 L678.7 387.8 L682.7 390.5 L686.7 387.8" fill="none" stroke="#e02020" stroke-width="1.05" opacity="0.95"/></svg>
<div class="t" style="left:110.35px;top:391.60px;font-size:13px;line-height:16px;font-weight:bold;">XLS</div>
<svg class="abs" style="left:0;top:0;overflow:visible" width="1" height="1"><path d="M110.4 407.5 L114.4 404.8 L118.4 407.5 L122.4 404.8 L126.4 407.5 L130.4 404.8 L134.4 407.5 L135.1 404.8" fill="none" stroke="#e02020" stroke-width="1.05" opacity="0.95"/></svg>
<div class="t" style="left:257.73px;top:391.60px;font-size:13px;line-height:16px;">30,15</div>
<div class="t" style="left:387.77px;top:391.60px;font-size:13px;line-height:16px;">30</div>
<div class="t" style="left:472.77px;top:391.53px;font-size:13.2px;line-height:16px;">Длина короткого луча вдоль оси X</div>
<svg class="abs" style="left:0;top:0;overflow:visible" width="1" height="1"><path d="M670.8 407.5 L674.8 404.8 L678.8 407.5 L682.7 404.8" fill="none" stroke="#e02020" stroke-width="1.05" opacity="0.95"/></svg>
<div class="t" style="left:110.72px;top:408.60px;font-size:13px;line-height:16px;font-weight:bold;">XLL</div>
<svg class="abs" style="left:0;top:0;overflow:visible" width="1" height="1"><path d="M110.7 424.5 L114.7 421.8 L118.7 424.5 L122.7 421.8 L126.7 424.5 L130.7 421.8 L134.7 424.5 L134.8 421.8" fill="none" stroke="#e02020" stroke-width="1.05" opacity="0.95"/></svg>
<div class="t" style="left:257.73px;top:408.60px;font-size:13px;line-height:16px;">99,85</div>
<div class="t" style="left:384.15px;top:408.60px;font-size:13px;line-height:16px;">100</div>
<div class="t" style="left:473.91px;top:408.53px;font-size:13.2px;line-height:16px;">Длина длинного луча вдоль оси X</div>
<svg class="abs" style="left:0;top:0;overflow:visible" width="1" height="1"><path d="M669.6 424.5 L673.6 421.8 L677.6 424.5 L681.6 421.8" fill="none" stroke="#e02020" stroke-width="1.05" opacity="0.95"/></svg>
<div class="t" style="left:110.72px;top:425.60px;font-size:13px;line-height:16px;font-weight:bold;">XLF</div>
<svg class="abs" style="left:0;top:0;overflow:visible" width="1" height="1"><path d="M110.7 441.5 L114.7 438.8 L118.7 441.5 L122.7 438.8 L126.7 441.5 L130.7 438.8 L134.7 441.5 L134.8 438.8" fill="none" stroke="#e02020" stroke-width="1.05" opacity="0.95"/></svg>
<div class="t" style="left:257.73px;top:425.60px;font-size:13px;line-height:16px;">144,3</div>
<div class="t" style="left:384.15px;top:425.60px;font-size:13px;line-height:16px;">145</div>
<div class="t" style="left:471.16px;top:425.53px;font-size:13.2px;line-height:16px;">Полная длина модели вдоль оси X</div>
<svg class="abs" style="left:0;top:0;overflow:visible" width="1" height="1"><path d="M672.4 441.5 L676.4 438.8 L680.4 441.5 L684.3 438.8" fill="none" stroke="#e02020" stroke-width="1.05" opacity="0.95"/></svg>
<div class="t" style="left:108.19px;top:459.60px;font-size:13px;line-height:16px;font-weight:bold;">YWS</div>
<svg class="abs" style="left:0;top:0;overflow:visible" width="1" height="1"><path d="M108.2 475.5 L112.2 472.8 L116.2 475.5 L120.2 472.8 L124.2 475.5 L128.2 472.8 L132.2 475.5 L136.2 472.8 L137.3 475.5" fill="none" stroke="#e02020" stroke-width="1.05" opacity="0.95"/></svg>
<div class="t" style="left:261.34px;top:459.60px;font-size:13px;line-height:16px;">14,9</div>
<div class="t" style="left:387.77px;top:459.60px;font-size:13px;line-height:16px;">15</div>
<div class="t" style="left:467.69px;top:459.53px;font-size:13.2px;line-height:16px;">Ширина короткого луча вдоль оси Y</div>
<svg class="abs" style="left:0;top:0;overflow:visible" width="1" height="1"><path d="M675.8 475.5 L679.8 472.8 L683.8 475.5 L687.8 472.8" fill="none" stroke="#e02020" stroke-width="1.05" opacity="0.95"/></svg>
<div class="t" style="left:108.55px;top:476.60px;font-size:13px;line-height:16px;font-weight:bold;">YWL</div>
<svg class="abs" style="left:0;top:0;overflow:visible" width="1" height="1"><path d="M108.6 492.5 L112.6 489.8 L116.6 492.5 L120.6 489.8 L124.6 492.5 L128.6 489.8 L132.6 492.5 L136.6 489.8 L136.9 492.5" fill="none" stroke="#e02020" stroke-width="1.05" opacity="0.95"/></svg>
<div class="t" style="left:261.34px;top:476.60px;font-size:13px;line-height:16px;">14,9</div>
<div class="t" style="left:387.77px;top:476.60px;font-size:13px;line-height:16px;">15</div>
<div class="t" style="left:468.82px;top:476.53px;font-size:13.2px;line-height:16px;">Ширина длинного луча вдоль оси Y</div>
<svg class="abs" style="left:0;top:0;overflow:visible" width="1" height="1"><path d="M674.7 492.5 L678.7 489.8 L682.7 492.5 L686.7 489.8" fill="none" stroke="#e02020" stroke-width="1.05" opacity="0.95"/></svg>
<div class="t" style="left:110.35px;top:493.60px;font-size:13px;line-height:16px;font-weight:bold;">YLS</div>
<svg class="abs" style="left:0;top:0;overflow:visible" width="1" height="1"><path d="M110.4 509.5 L114.4 506.8 L118.4 509.5 L122.4 506.8 L126.4 509.5 L130.4 506.8 L134.4 509.5 L135.1 506.8" fill="none" stroke="#e02020" stroke-width="1.05" opacity="0.95"/></svg>
<div class="t" style="left:257.73px;top:493.60px;font-size:13px;line-height:16px;">30,15</div>
<div class="t" style="left:387.77px;top:493.60px;font-size:13px;line-height:16px;">30</div>
<div class="t" style="left:472.77px;top:493.53px;font-size:13.2px;line-height:16px;">Длина короткого луча вдоль оси Y</div>
<svg class="abs" style="left:0;top:0;overflow:visible" width="1" height="1"><path d="M670.8 509.5 L674.8 506.8 L678.8 509.5 L682.7 506.8" fill="none" stroke="#e02020" stroke-width="1.05" opacity="0.95"/></svg>
<div class="t" style="left:110.72px;top:510.60px;font-size:13px;line-height:16px;font-weight:bold;">YLL</div>
<svg class="abs" style="left:0;top:0;overflow:visible" width="1" height="1"><path d="M110.7 526.5 L114.7 523.8 L118.7 526.5 L122.7 523.8 L126.7 526.5 L130.7 523.8 L134.7 526.5 L134.8 523.8" fill="none" stroke="#e02020" stroke-width="1.05" opacity="0.95"/></svg>
<div class="t" style="left:257.73px;top:510.60px;font-size:13px;line-height:16px;">99,85</div>
<div class="t" style="left:384.15px;top:510.60px;font-size:13px;line-height:16px;">100</div>
<div class="t" style="left:473.91px;top:510.53px;font-size:13.2px;line-height:16px;">Длина длинного луча вдоль оси Y</div>
<svg class="abs" style="left:0;top:0;overflow:visible" width="1" height="1"><path d="M669.6 526.5 L673.6 523.8 L677.6 526.5 L681.6 523.8" fill="none" stroke="#e02020" stroke-width="1.05" opacity="0.95"/></svg>
<div class="t" style="left:110.72px;top:527.60px;font-size:13px;line-height:16px;font-weight:bold;">YLF</div>
<svg class="abs" style="left:0;top:0;overflow:visible" width="1" height="1"><path d="M110.7 543.5 L114.7 540.8 L118.7 543.5 L122.7 540.8 L126.7 543.5 L130.7 540.8 L134.7 543.5 L134.8 540.8" fill="none" stroke="#e02020" stroke-width="1.05" opacity="0.95"/></svg>
<div class="t" style="left:257.73px;top:527.60px;font-size:13px;line-height:16px;">144,3</div>
<div class="t" style="left:384.15px;top:527.60px;font-size:13px;line-height:16px;">145</div>
<div class="t" style="left:471.16px;top:527.53px;font-size:13.2px;line-height:16px;">Полная длина модели вдоль оси Y</div>
<svg class="abs" style="left:0;top:0;overflow:visible" width="1" height="1"><path d="M672.4 543.5 L676.4 540.8 L680.4 543.5 L684.3 540.8" fill="none" stroke="#e02020" stroke-width="1.05" opacity="0.95"/></svg>
<div class="abs" style="left:334px;top:543px;width:122px;height:18px;border:2px solid #1a6fc4;"></div>
<div class="abs" style="left:453px;top:558px;width:5px;height:5px;background:#0078d7;"></div>

<!-- drawing -->
<svg class="abs" style="left:0;top:0" width="1366" height="768" viewBox="0 0 1366 768"><rect x="722" y="182" width="494" height="444" fill="#212830"/><path d="M879.9 284.20000000000005Q879.9 280.6 883.5 280.6L898.8 280.6Q902.4 280.6 902.4 284.20000000000005L902.4 324.5A2.1 2.1 0 1 0 904.5 326.6L1123.6000000000001 326.6Q1127.2 326.6 1127.2 330.20000000000005L1127.2 346.0Q1127.2 349.6 1123.6000000000001 349.6L904.5 349.6A2.1 2.1 0 1 0 902.4 351.70000000000005L902.4 576.8Q902.4 580.4 898.8 580.4L883.5 580.4Q879.9 580.4 879.9 576.8L879.9 351.70000000000005A2.1 2.1 0 1 0 877.8 349.6L839.4 349.6Q835.8 349.6 835.8 346.0L835.8 330.20000000000005Q835.8 326.6 839.4 326.6L877.8 326.6A2.1 2.1 0 1 0 879.9 324.5Z" stroke="#3f5c84" stroke-width="2.0" fill="none" stroke-linejoin="round"/><path d="M1081.5 331L1104.5 345M1104.5 331L1081.5 345" stroke="#43628b" stroke-width="3.9" stroke-linecap="round"/><path d="M885 535.6L890.9 547.3L896.8 535.6M890.9 547.3L890.9 557" stroke="#45658e" stroke-width="3.7" fill="none" stroke-linecap="round" stroke-linejoin="round"/><path d="M835.5 215L835.5 328" stroke="#d9dbde" stroke-width="1.0" fill="none"/><path d="M1126.5 215L1126.5 328" stroke="#d9dbde" stroke-width="1.0" fill="none"/><path d="M835.5 217.5L1126.5 217.5" stroke="#d9dbde" stroke-width="1.0" fill="none"/><path d="M835.5 217.5 L846.5 215.2 L846.5 219.8Z" fill="#f6f6f6"/><path d="M1126.5 217.5 L1115.5 215.2 L1115.5 219.8Z" fill="#f6f6f6"/><path d="M835.5 258.5L879.5 258.5" stroke="#d9dbde" stroke-width="1.0" fill="none"/><path d="M835.5 258.5 L846.5 256.2 L846.5 260.8Z" fill="#f6f6f6"/><path d="M879.5 258.5 L868.5 256.2 L868.5 260.8Z" fill="#f6f6f6"/><path d="M902.5 258.5L1126.5 258.5" stroke="#d9dbde" stroke-width="1.0" fill="none"/><path d="M902.5 258.5 L913.5 256.2 L913.5 260.8Z" fill="#f6f6f6"/><path d="M1126.5 258.5 L1115.5 256.2 L1115.5 260.8Z" fill="#f6f6f6"/><path d="M879.5 256L879.5 319.5" stroke="#d9dbde" stroke-width="1.0" fill="none"/><path d="M902.5 256L902.5 281" stroke="#d9dbde" stroke-width="1.0" fill="none"/><path d="M891 258.5L897.3 242.5" stroke="#d9dbde" stroke-width="1.0" fill="none"/><path d="M897.3 242.5L936 242.5" stroke="#d9dbde" stroke-width="1.0" fill="none"/><path d="M750 280.5L831 280.5" stroke="#d9dbde" stroke-width="1.0" fill="none"/><path d="M839.5 280.5L882 280.5" stroke="#d9dbde" stroke-width="1.0" fill="none"/><path d="M752.5 280.5L752.5 580.5" stroke="#d9dbde" stroke-width="1.0" fill="none"/><path d="M752.5 280.5 L750.2 291.5 L754.8 291.5Z" fill="#f6f6f6"/><path d="M752.5 580.5 L750.2 569.5 L754.8 569.5Z" fill="#f6f6f6"/><path d="M814.5 280.5L814.5 326.5" stroke="#d9dbde" stroke-width="1.0" fill="none"/><path d="M814.5 280.5 L812.2 291.5 L816.8 291.5Z" fill="#f6f6f6"/><path d="M814.5 326.5 L812.2 315.5 L816.8 315.5Z" fill="#f6f6f6"/><path d="M812 326.5L873.2 326.5" stroke="#d9dbde" stroke-width="1.0" fill="none"/><path d="M813 349.5L838 349.5" stroke="#d9dbde" stroke-width="1.0" fill="none"/><path d="M814.5 339L798.8 359.5" stroke="#d9dbde" stroke-width="1.0" fill="none"/><path d="M798.8 359.5L760 359.5" stroke="#d9dbde" stroke-width="1.0" fill="none"/><path d="M814.5 349.5L814.5 580.5" stroke="#d9dbde" stroke-width="1.0" fill="none"/><path d="M814.5 349.5 L812.2 360.5 L816.8 360.5Z" fill="#f6f6f6"/><path d="M814.5 580.5 L812.2 569.5 L816.8 569.5Z" fill="#f6f6f6"/><path d="M750 580.5L882.5 580.5" stroke="#d9dbde" stroke-width="1.0" fill="none"/><path d="M879.5 580L879.5 602" stroke="#d9dbde" stroke-width="1.0" fill="none"/><path d="M902.5 580L902.5 602" stroke="#d9dbde" stroke-width="1.0" fill="none"/><path d="M857 599.5L962 599.5" stroke="#d9dbde" stroke-width="1.0" fill="none"/><path d="M879.5 599.5 L868.5 597.2 L868.5 601.8Z" fill="#f6f6f6"/><path d="M902.5 599.5 L913.5 597.2 L913.5 601.8Z" fill="#f6f6f6"/><path d="M1139.1 303L1139.1 372.5" stroke="#a9acb1" stroke-width="1.7" fill="none"/><path d="M1139.5 326.5 L1137.2 315.5 L1141.8 315.5Z" fill="#f6f6f6"/><path d="M1139.5 349.5 L1137.2 360.5 L1141.8 360.5Z" fill="#f6f6f6"/><path d="M1126 326.5L1141.5 326.5" stroke="#d9dbde" stroke-width="1.0" fill="none"/><path d="M1126 349.5L1141.5 349.5" stroke="#d9dbde" stroke-width="1.0" fill="none"/><path d="M1139.5 338.7L1162 354.5" stroke="#d9dbde" stroke-width="1.0" fill="none"/><path d="M1162 354.5L1199.5 354.5" stroke="#d9dbde" stroke-width="1.0" fill="none"/><g transform="translate(968.6 201.5)"><path transform="translate(0.00 0) scale(11.2)" d="M0 0L0.66 1M0.66 0L0 1" stroke="#ececec" stroke-width="0.1339" fill="none" stroke-linecap="round" stroke-linejoin="round"/><path transform="translate(9.89 0) scale(11.2)" d="M0 0L0 1L0.53 1" stroke="#ececec" stroke-width="0.1339" fill="none" stroke-linecap="round" stroke-linejoin="round"/><path transform="translate(17.63 0) scale(11.2)" d="M0 1L0 0L0.6 0M0 0.48L0.46 0.48" stroke="#ececec" stroke-width="0.1339" fill="none" stroke-linecap="round" stroke-linejoin="round"/></g><g transform="translate(844.9 242.6)"><path transform="translate(0.00 0) scale(11.2)" d="M0 0L0.66 1M0.66 0L0 1" stroke="#ececec" stroke-width="0.1339" fill="none" stroke-linecap="round" stroke-linejoin="round"/><path transform="translate(9.89 0) scale(11.2)" d="M0 0L0 1L0.53 1" stroke="#ececec" stroke-width="0.1339" fill="none" stroke-linecap="round" stroke-linejoin="round"/><path transform="translate(17.63 0) scale(11.2)" d="M0.6 0.16C0.53 0.03 0.42 0 0.31 0C0.13 0 0.03 0.11 0.03 0.25C0.03 0.42 0.19 0.46 0.31 0.5C0.47 0.55 0.62 0.6 0.62 0.76C0.62 0.9 0.49 1 0.31 1C0.17 1 0.06 0.95 0 0.83" stroke="#ececec" stroke-width="0.1339" fill="none" stroke-linecap="round" stroke-linejoin="round"/></g><g transform="translate(902.5 226.5)"><path transform="translate(0.00 0) scale(11.2)" d="M0 0L0.4 0.5L0.8 0M0.4 0.5L0.4 1" stroke="#ececec" stroke-width="0.1339" fill="none" stroke-linecap="round" stroke-linejoin="round"/><path transform="translate(10.26 0) scale(11.2)" d="M0 0L0.2 1L0.43 0.2L0.66 1L0.86 0" stroke="#ececec" stroke-width="0.1339" fill="none" stroke-linecap="round" stroke-linejoin="round"/><path transform="translate(21.89 0) scale(11.2)" d="M0.6 0.16C0.53 0.03 0.42 0 0.31 0C0.13 0 0.03 0.11 0.03 0.25C0.03 0.42 0.19 0.46 0.31 0.5C0.47 0.55 0.62 0.6 0.62 0.76C0.62 0.9 0.49 1 0.31 1C0.17 1 0.06 0.95 0 0.83" stroke="#ececec" stroke-width="0.1339" fill="none" stroke-linecap="round" stroke-linejoin="round"/></g><g transform="translate(1002.2 242.6)"><path transform="translate(0.00 0) scale(11.2)" d="M0 0L0.66 1M0.66 0L0 1" stroke="#ececec" stroke-width="0.1339" fill="none" stroke-linecap="round" stroke-linejoin="round"/><path transform="translate(9.89 0) scale(11.2)" d="M0 0L0 1L0.53 1" stroke="#ececec" stroke-width="0.1339" fill="none" stroke-linecap="round" stroke-linejoin="round"/><path transform="translate(17.63 0) scale(11.2)" d="M0 0L0 1L0.53 1" stroke="#ececec" stroke-width="0.1339" fill="none" stroke-linecap="round" stroke-linejoin="round"/></g><g transform="translate(764.6 344.3)"><path transform="translate(0.00 0) scale(11.2)" d="M0 0L0.66 1M0.66 0L0 1" stroke="#ececec" stroke-width="0.1339" fill="none" stroke-linecap="round" stroke-linejoin="round"/><path transform="translate(9.89 0) scale(11.2)" d="M0 0L0.2 1L0.43 0.2L0.66 1L0.86 0" stroke="#ececec" stroke-width="0.1339" fill="none" stroke-linecap="round" stroke-linejoin="round"/><path transform="translate(21.52 0) scale(11.2)" d="M0.6 0.16C0.53 0.03 0.42 0 0.31 0C0.13 0 0.03 0.11 0.03 0.25C0.03 0.42 0.19 0.46 0.31 0.5C0.47 0.55 0.62 0.6 0.62 0.76C0.62 0.9 0.49 1 0.31 1C0.17 1 0.06 0.95 0 0.83" stroke="#ececec" stroke-width="0.1339" fill="none" stroke-linecap="round" stroke-linejoin="round"/></g><g transform="translate(1166.7 339)"><path transform="translate(0.00 0) scale(11.2)" d="M0 0L0.66 1M0.66 0L0 1" stroke="#ececec" stroke-width="0.1339" fill="none" stroke-linecap="round" stroke-linejoin="round"/><path transform="translate(9.89 0) scale(11.2)" d="M0 0L0.2 1L0.43 0.2L0.66 1L0.86 0" stroke="#ececec" stroke-width="0.1339" fill="none" stroke-linecap="round" stroke-linejoin="round"/><path transform="translate(21.52 0) scale(11.2)" d="M0 0L0 1L0.53 1" stroke="#ececec" stroke-width="0.1339" fill="none" stroke-linecap="round" stroke-linejoin="round"/></g><g transform="translate(929.0 583.4)"><path transform="translate(0.00 0) scale(11.2)" d="M0 0L0.4 0.5L0.8 0M0.4 0.5L0.4 1" stroke="#ececec" stroke-width="0.1339" fill="none" stroke-linecap="round" stroke-linejoin="round"/><path transform="translate(10.26 0) scale(11.2)" d="M0 0L0.2 1L0.43 0.2L0.66 1L0.86 0" stroke="#ececec" stroke-width="0.1339" fill="none" stroke-linecap="round" stroke-linejoin="round"/><path transform="translate(21.89 0) scale(11.2)" d="M0 0L0 1L0.53 1" stroke="#ececec" stroke-width="0.1339" fill="none" stroke-linecap="round" stroke-linejoin="round"/></g><g transform="translate(798.0 316.6) rotate(-90)"><path transform="translate(0.00 0) scale(11.2)" d="M0 0L0.4 0.5L0.8 0M0.4 0.5L0.4 1" stroke="#ececec" stroke-width="0.1339" fill="none" stroke-linecap="round" stroke-linejoin="round"/><path transform="translate(10.26 0) scale(11.2)" d="M0 0L0 1L0.53 1" stroke="#ececec" stroke-width="0.1339" fill="none" stroke-linecap="round" stroke-linejoin="round"/><path transform="translate(18.00 0) scale(11.2)" d="M0.6 0.16C0.53 0.03 0.42 0 0.31 0C0.13 0 0.03 0.11 0.03 0.25C0.03 0.42 0.19 0.46 0.31 0.5C0.47 0.55 0.62 0.6 0.62 0.76C0.62 0.9 0.49 1 0.31 1C0.17 1 0.06 0.95 0 0.83" stroke="#ececec" stroke-width="0.1339" fill="none" stroke-linecap="round" stroke-linejoin="round"/></g><g transform="translate(737.0 443.4) rotate(-90)"><path transform="translate(0.00 0) scale(11.2)" d="M0 0L0.4 0.5L0.8 0M0.4 0.5L0.4 1" stroke="#ececec" stroke-width="0.1339" fill="none" stroke-linecap="round" stroke-linejoin="round"/><path transform="translate(10.26 0) scale(11.2)" d="M0 0L0 1L0.53 1" stroke="#ececec" stroke-width="0.1339" fill="none" stroke-linecap="round" stroke-linejoin="round"/><path transform="translate(18.00 0) scale(11.2)" d="M0 1L0 0L0.6 0M0 0.48L0.46 0.48" stroke="#ececec" stroke-width="0.1339" fill="none" stroke-linecap="round" stroke-linejoin="round"/></g><g transform="translate(798.4 478.4) rotate(-90)"><path transform="translate(0.00 0) scale(11.2)" d="M0 0L0.4 0.5L0.8 0M0.4 0.5L0.4 1" stroke="#ececec" stroke-width="0.1339" fill="none" stroke-linecap="round" stroke-linejoin="round"/><path transform="translate(10.26 0) scale(11.2)" d="M0 0L0 1L0.53 1" stroke="#ececec" stroke-width="0.1339" fill="none" stroke-linecap="round" stroke-linejoin="round"/><path transform="translate(18.00 0) scale(11.2)" d="M0 0L0 1L0.53 1" stroke="#ececec" stroke-width="0.1339" fill="none" stroke-linecap="round" stroke-linejoin="round"/></g></svg>
<!-- scroll -->
<div class="abs" style="left:1301px;top:159px;width:17px;height:524px;background:#efefef;"></div>
<div class="abs" style="left:1301px;top:163px;width:17px;height:5px;background:#8c8c8c;"></div>
<div class="abs" style="left:1305px;top:165px;width:9px;height:1px;background:#222;"></div>
<svg class="abs" style="left:1301px;top:168px" width="17" height="17" viewBox="0 0 17 17"><path d="M4.800 11.200L8.500 7.500L12.200 11.200" stroke="#4a4a4a" stroke-width="2" fill="none"/></svg><div class="abs" style="left:1302px;top:185px;width:15px;height:223px;background:#c9c9c9;"></div>
<svg class="abs" style="left:1301px;top:649px" width="17" height="17" viewBox="0 0 17 17"><path d="M4.800 6.800L8.500 10.500L12.200 6.800" stroke="#4a4a4a" stroke-width="2" fill="none"/></svg><div class="abs" style="left:0px;top:668px;width:1318px;height:16px;background:#efefef;"></div>
<div class="abs" style="left:16px;top:668px;width:578px;height:15px;background:#c9c9c9;"></div>
<svg class="abs" style="left:0px;top:667px" width="17" height="17" viewBox="0 0 17 17"><path d="M10.200 4.800L6.500 8.500L10.200 12.200" stroke="#4a4a4a" stroke-width="2" fill="none"/></svg><svg class="abs" style="left:1279px;top:667px" width="17" height="17" viewBox="0 0 17 17"><path d="M6.800 4.800L10.500 8.500L6.800 12.200" stroke="#4a4a4a" stroke-width="2" fill="none"/></svg><div class="abs" style="left:1296px;top:667px;width:5px;height:17px;background:#8c8c8c;"></div>
<div class="abs" style="left:1298px;top:670px;width:1px;height:11px;background:#222;"></div>

<!-- sidebar -->
<div class="abs" style="left:1318px;top:127px;width:1px;height:580px;background:#a9a9a9;"></div>
<div class="abs" style="left:1319px;top:128px;width:47px;height:579px;background:#efefef;"></div>
<div class="abs" style="left:1318px;top:380px;width:7px;height:73px;background:#666;"></div>
<svg class="abs" style="left:1318px;top:410px" width="8" height="12" viewBox="0 0 8 12"><path d="M1.500 2.500L6 6L1.500 9.500Z" fill="#fff"/></svg><div class="abs" style="left:1341px;top:139px;width:10px;height:1px;background:#333;"></div>
<div class="abs" style="left:1341px;top:142px;width:10px;height:1px;background:#333;"></div>
<div class="abs" style="left:1341px;top:145px;width:10px;height:1px;background:#333;"></div>
<svg class="abs" style="left:1334px;top:161px" width="24" height="24" viewBox="0 0 24 24">
<rect x="2.500" y="2.500" width="19" height="19" rx="1" fill="#fff" stroke="#3a3a3a" stroke-width="1"/>
<rect x="2" y="2" width="20" height="4" fill="#555"/>
<path d="M6 11.500h12M6 15.500h12" stroke="#2a7fc4" stroke-width="1"/>
<circle cx="14" cy="11.500" r="1.600" fill="#2a7fc4"/><circle cx="9" cy="15.500" r="1.600" fill="#2a7fc4"/>
</svg><svg class="abs" style="left:1334px;top:196px" width="26" height="26" viewBox="0 0 26 26">
<path d="M2.500 18L8.500 3.500L9.700 3.500L15.500 18M4.800 13h9" stroke="#333" stroke-width="1.700" fill="none"/>
<path d="M14 17.500L21 9.500C22 8.400 23.800 9.800 22.800 11L16.500 19.500Z" fill="#fff" stroke="#555" stroke-width="1"/>
<path d="M8.500 22.500C11 22.800 15 22 16.500 19.500L14 17.500C12 18 11 20.500 8.500 22.500Z" fill="#7db7ea" stroke="#2a7fc4" stroke-width="1"/>
</svg><svg class="abs" style="left:1333px;top:230px" width="26" height="26" viewBox="0 0 26 26">
<path d="M2 21.500V4.500Q2 3 3.500 3H8L10.500 6H22.500Q24 6 24 7.500V21.500Z" fill="#fbdf9d" stroke="#e8973e" stroke-width="1"/>
<path d="M2 21.500L4 9.500H10" fill="none" stroke="#e8973e" stroke-width="1"/>
<rect x="10.500" y="9.500" width="14" height="13" fill="#fff" stroke="#333" stroke-width="1"/>
<path d="M11 22L15.500 16L18 19L20.500 16.500L24 20.500V22Z" fill="#3b8fd6"/>
<circle cx="13.800" cy="12.800" r="1.400" fill="#f29b4a"/>
</svg><svg class="abs" style="left:1334px;top:266px" width="24" height="24" viewBox="0 0 24 24">
<circle cx="12" cy="12" r="9.700" fill="#fff" stroke="#444" stroke-width="1"/>
<path d="M16.800 7.200L13.800 13.800L7.200 16.800L10.200 10.200Z" fill="#2a7fc4"/>
<circle cx="12" cy="12" r="1.300" fill="#fff"/>
</svg><svg class="abs" style="left:0;top:0;overflow:visible" width="1" height="1"><g transform="translate(1337.400 303) scale(1.330) translate(-161.800 -135.200)" fill="none" stroke="#2f86c8" stroke-linecap="round"><path stroke-width="1.400" d="M170.800 137C170.400 135.200 168.400 135 167.700 137.200L165.100 148C164.600 150.300 163.200 151.200 161.900 149.900"/><path stroke-width="1.100" d="M164.800 139.600H169.200"/><path stroke-width="1.600" d="M169.800 143.900C171 143.300 171.600 143.800 172 145L173.600 149.200C174 150.400 174.800 150.900 175.800 150.300"/><path stroke-width="1.050" d="M176.100 143.700C175 143.300 174.200 144 173 145.600L171.500 148.200C170.600 149.800 169.900 150.800 168.900 150.400"/></g></svg>
<!-- tabs -->
<div class="abs" style="left:0px;top:684px;width:1318px;height:23px;background:#efefef;"></div>
<svg class="abs" style="left:0;top:684px" width="130" height="22" viewBox="0 0 130 22">
<g fill="#8a8a8a">
<rect x="13" y="4.500" width="1.300" height="11.500"/><path d="M20 4.500V16L15 10.250Z"/>
<path d="M41 4.500V16L36 10.250Z"/>
<path d="M57.500 4.500V16L62.500 10.250Z"/>
<path d="M78.500 4.500V16L83.500 10.250Z"/><rect x="84.700" y="4.500" width="1.300" height="11.500"/>
</g>
<path d="M104 10.500H117M110.500 4V17" stroke="#000" stroke-width="3"/>
</svg><div class="abs" style="left:198px;top:684px;width:54px;height:20px;background:#fff;"></div>
<div class="abs" style="left:198px;top:703px;width:54px;height:3px;background:#666;"></div>
<div class="abs" style="left:198px;top:690px;width:1px;height:10px;background:#b4b4b4;"></div>
<div class="abs" style="left:313px;top:690px;width:1px;height:10px;background:#b4b4b4;"></div>
<div class="abs" style="left:379px;top:690px;width:1px;height:10px;background:#b4b4b4;"></div>
<div class="abs" style="left:466px;top:690px;width:1px;height:10px;background:#b4b4b4;"></div>
<div class="abs" style="left:527px;top:690px;width:1px;height:10px;background:#b4b4b4;"></div>
<div class="t" style="left:140.1px;top:688.0px;font-size:12.5px;line-height:15px;letter-spacing:-0.311px;-webkit-text-stroke:0.22px #000;">Главная</div>
<div class="t" style="left:210.3px;top:688.0px;font-size:12.5px;line-height:15px;letter-spacing:-0.688px;font-weight:bold;">Ввод</div>
<div class="t" style="left:262.8px;top:688.0px;font-size:12.5px;line-height:15px;letter-spacing:0.301px;-webkit-text-stroke:0.22px #000;">Вывод</div>
<div class="t" style="left:326.0px;top:688.0px;font-size:12.5px;line-height:15px;letter-spacing:-0.034px;-webkit-text-stroke:0.22px #000;">Анализ</div>
<div class="t" style="left:392.0px;top:688.0px;font-size:12.5px;line-height:15px;letter-spacing:0.134px;-webkit-text-stroke:0.22px #000;">Настройки</div>
<div class="t" style="left:478.5px;top:688.0px;font-size:12.5px;line-height:15px;letter-spacing:-0.448px;-webkit-text-stroke:0.22px #000;">Расчёт</div>

<!-- status -->
<div class="abs" style="left:0px;top:706px;width:1366px;height:1px;background:#b4b4b4;"></div>
<div class="abs" style="left:0px;top:707px;width:1366px;height:21px;background:#efefef;"></div>
<svg class="abs" style="left:9px;top:709px" width="18" height="17" viewBox="0 0 18 17">
<path d="M1.500 1.500H14.500L16.500 3.500V15.500H1.500Z" fill="none" stroke="#d23a3a" stroke-width="1.200"/>
<path d="M4.500 1.500V6.500H12.500V1.500M4.500 15.500V10.500H13.500V15.500M6.500 12.500V15" fill="none" stroke="#d23a3a" stroke-width="1.200"/>
</svg><div class="abs" style="left:32px;top:709px;width:1px;height:17px;background:#c0c0c0;"></div>
<div class="abs" style="left:176px;top:709px;width:1px;height:17px;background:#c0c0c0;"></div>
<div class="abs" style="left:431px;top:709px;width:1px;height:17px;background:#c0c0c0;"></div>
<div class="abs" style="left:570px;top:709px;width:1px;height:17px;background:#c0c0c0;"></div>
<div class="abs" style="left:705px;top:709px;width:1px;height:17px;background:#c0c0c0;"></div>
<div class="abs" style="left:774px;top:709px;width:1px;height:17px;background:#c0c0c0;"></div>
<div class="abs" style="left:820px;top:709px;width:1px;height:17px;background:#c0c0c0;"></div>
<div class="abs" style="left:850px;top:709px;width:1px;height:17px;background:#c0c0c0;"></div>
<div class="abs" style="left:1169px;top:709px;width:1px;height:17px;background:#c0c0c0;"></div>
<div class="abs" style="left:1314px;top:709px;width:1px;height:17px;background:#c0c0c0;"></div>
<div class="t" style="left:40.5px;top:712.5px;font-size:12.3px;line-height:15px;letter-spacing:0.24px;-webkit-text-stroke:0.22px #000;">Лист 2 из 6</div>
<div class="t" style="left:440.5px;top:712.5px;font-size:12.3px;line-height:15px;letter-spacing:0.377px;-webkit-text-stroke:0.22px #000;">Базовый</div>
<div class="t" style="left:614.5px;top:712.5px;font-size:12.3px;line-height:15px;letter-spacing:0.408px;-webkit-text-stroke:0.22px #000;">Русский</div>
<div class="t" style="left:928.5px;top:712.5px;font-size:12.3px;line-height:15px;letter-spacing:-0.289px;-webkit-text-stroke:0.22px #000;">Среднее значение: ; Сумма: 0</div>
<div class="t" style="left:1321.5px;top:712.5px;font-size:12.3px;line-height:15px;letter-spacing:-0.075px;-webkit-text-stroke:0.22px #000;">100 %</div>
<div class="abs" style="left:784px;top:713px;width:18px;height:11px;border:1px solid #3a8fc8;background:#fff;"></div><div class="abs" style="left:809px;top:711px;width:1px;height:14px;background:#333;"></div>
<div class="abs" style="left:807px;top:711px;width:5px;height:1px;background:#333;"></div>
<div class="abs" style="left:807px;top:724px;width:5px;height:1px;background:#333;"></div>
<div class="abs" style="left:1179px;top:718px;width:10px;height:2px;background:#222;"></div>
<div class="abs" style="left:1194px;top:718px;width:98px;height:1px;background:#555;"></div>
<div class="abs" style="left:1240px;top:713px;width:4px;height:11px;border:1px solid #444;background:#efefef;"></div><div class="abs" style="left:1297px;top:718px;width:10px;height:2px;background:#222;"></div>
<div class="abs" style="left:1301px;top:714px;width:2px;height:10px;background:#222;"></div>

<!-- taskbar -->
<div class="abs" style="left:0;top:728px;width:1366px;height:40px;background:linear-gradient(90deg,#1e4254 0%,#1f4a5a 22%,#204d5c 40%,#1f4459 58%,#1c3857 72%,#1b2f55 85%,#1a2a52 100%);"></div><div class="abs" style="left:198px;top:728px;width:48px;height:40px;background:rgba(255,255,255,0.18);"></div>
<div class="abs" style="left:55px;top:766px;width:40px;height:2px;background:#7ab8ea;"></div>
<div class="abs" style="left:104px;top:766px;width:40px;height:2px;background:#7ab8ea;"></div>
<div class="abs" style="left:153px;top:766px;width:40px;height:2px;background:#7ab8ea;"></div>
<div class="abs" style="left:198px;top:766px;width:48px;height:2px;background:#7ab8ea;"></div>
<svg class="abs" style="left:15px;top:739px" width="18" height="18" viewBox="0 0 18 18">
<path d="M0.500 3L7.500 2V8.500H0.500ZM8.500 1.800L17.500 0.500V8.500H8.500ZM0.500 9.500H7.500V16L0.500 15ZM8.500 9.500H17.500V17.500L8.500 16.200Z" fill="#fff"/></svg><svg class="abs" style="left:63px;top:736px" width="24" height="24" viewBox="0 0 24 24">
<defs><linearGradient id="og" x1="0.200" y1="0" x2="0.800" y2="1"><stop offset="0" stop-color="#ff3b3b"/><stop offset="0.500" stop-color="#e0141f"/><stop offset="1" stop-color="#a30d1a"/></linearGradient></defs>
<ellipse cx="12" cy="12" rx="11.200" ry="11.500" fill="url(#og)"/><ellipse cx="12" cy="12" rx="4.300" ry="8.600" fill="#1f4556"/>
</svg><svg class="abs" style="left:110px;top:735px" width="27" height="26" viewBox="0 0 27 26">
<path d="M12 6C5 6 1 11 2 16C3 21 9 23 14 22C16 21.600 15 19 17 18C20 17 23 18 23 13C23 9 18 6 12 6Z" fill="#e9e4d4" stroke="#8c8c7c" stroke-width="0.800"/>
<circle cx="7" cy="12" r="1.800" fill="#d33"/><circle cx="11" cy="9.500" r="1.800" fill="#e8b800"/><circle cx="6.500" cy="16.500" r="1.800" fill="#3a9a3a"/><circle cx="16" cy="10" r="1.800" fill="#2a6fd0"/>
<path d="M13 22L20 6L23 1.500L24.500 2.500L22 7.500L15 23Z" fill="#d79a4a" stroke="#8a5a20" stroke-width="0.600"/>
</svg><svg class="abs" style="left:160px;top:735px" width="25" height="25" viewBox="0 0 25 25">
<rect x="0.500" y="0.500" width="24" height="24" rx="2" fill="#2c3fd0" stroke="#1a2590" stroke-width="1"/>
<rect x="6" y="1" width="13" height="8" fill="#c8ccd8"/><rect x="14" y="2" width="3" height="6" fill="#2c3fd0"/>
<rect x="3.500" y="12" width="18" height="12" fill="#fff"/>
<path d="M3.500 14.500H21.500M3.500 17.500H21.500M3.500 20.500H21.500" stroke="#e06070" stroke-width="1.400"/>
</svg><svg class="abs" style="left:211px;top:736px" width="22" height="25" viewBox="0 0 22 25">
<defs><linearGradient id="lg" x1="0" y1="0" x2="0" y2="1"><stop offset="0" stop-color="#3fd043"/><stop offset="1" stop-color="#16953c"/></linearGradient></defs>
<path d="M3 0.500H14L21.500 8V22Q21.500 24.500 19 24.500H3Q0.500 24.500 0.500 22V3Q0.500 0.500 3 0.500Z" fill="url(#lg)"/>
<path d="M14 0.500L21.500 8L21.500 2Q21.500 0.500 20 0.500Z" fill="#7ee27a"/>
<rect x="4.500" y="10.500" width="10" height="6" fill="none" stroke="#e8ffe8" stroke-width="1.100"/>
<path d="M4.500 13.500H14.500M7.800 10.500V16.500M11.200 10.500V16.500" stroke="#e8ffe8" stroke-width="0.900"/>
<rect x="10.500" y="14.500" width="5" height="4" fill="#27ad40" stroke="#e8ffe8" stroke-width="1"/>
</svg><svg class="abs" style="left:1012px;top:736px" width="200" height="26" viewBox="0 0 200 26">
<path d="M4 8L19 3.500L16 20L10 13Z" fill="#f4f4f4"/><path d="M10 13L19 3.500L12 19Z" fill="#d0d0d8"/><circle cx="7" cy="16" r="4.200" fill="#d9262c"/><rect x="4.500" y="15.200" width="5" height="1.600" fill="#fff"/>
<circle cx="35" cy="12" r="8.500" fill="#2a2a2a"/><path d="M30 14L38 7L40 11L33 17Z" fill="#39b54a"/><path d="M31 9L39 16" stroke="#e8e8e8" stroke-width="1.500"/><circle cx="35" cy="12" r="8" fill="none" stroke="#e01b24" stroke-width="1.800"/><path d="M29.300 17.700L40.700 6.300" stroke="#e01b24" stroke-width="1.800"/>
<rect x="51" y="4" width="16" height="16" rx="3" fill="#f6f8fb"/><path d="M55.500 17.200C52 17.200 51.800 12.700 55 12.400C55.300 8.300 61 7.600 62.400 11C66.200 10.800 66.600 17.200 63 17.200Z" fill="#1a8cf0"/><path d="M59.200 16.800V13M57.200 14.600L59.200 12.600L61.200 14.600" stroke="#fff" stroke-width="1.400" fill="none"/>
<rect x="75" y="4" width="16" height="16" rx="1.500" fill="#2f86c9"/><rect x="77" y="6" width="9" height="6" fill="#bfe0f6" stroke="#e8f4fc" stroke-width="0.700"/><rect x="80" y="10" width="9" height="6" fill="#8cc8f0" stroke="#e8f4fc" stroke-width="0.700"/><path d="M75 18.500L91 16.500V20H75Z" fill="#e2c64a"/>
<circle cx="107" cy="12" r="8.300" fill="#f7831e"/><path d="M101.500 15.500C105 14.500 109 11.500 111 7.500C110.500 11.500 108.500 15 112.500 16.500C108.500 16.800 105 17 101.500 15.500Z" fill="#fff"/>
<rect x="127" y="8.500" width="12" height="7.500" fill="none" stroke="#fff" stroke-width="1.300"/><rect x="128.500" y="10" width="6" height="4.500" fill="#fff"/><rect x="139.500" y="10.500" width="1.500" height="3.500" fill="#fff"/><path d="M124 6V9M126.500 6V9M123 9H127.500V11.500Q125.200 13.500 123 11.500ZM125.200 13V16" stroke="#fff" stroke-width="1" fill="none"/>
<circle cx="160.300" cy="17.600" r="1.500" fill="#fff"/><path d="M157 19A4.500 4.500 0 0 1 161.500 14.500" stroke="#fff" stroke-width="1.200" fill="none"/><path d="M153.500 19A8 8 0 0 1 161.500 11" stroke="#fff" stroke-width="1.200" fill="none"/><path d="M150 19A11.500 11.500 0 0 1 161.500 7.500" stroke="#fff" stroke-width="1.200" fill="none"/>
<path d="M171.500 9.500H174.500L178.500 5.500V18.500L174.500 14.500H171.500Z" fill="none" stroke="#fff" stroke-width="1.200" stroke-linejoin="round"/><path d="M181 9.500Q182.800 12 181 14.500M183.500 7.500Q186.500 12 183.500 16.500M186 5.500Q190.200 12 186 18.500" stroke="#fff" stroke-width="1.100" fill="none"/>
</svg><div class="t" style="left:1208.5px;top:741.5px;font-size:12.3px;line-height:15px;letter-spacing:-0.785px;color:#fff;-webkit-text-stroke:0.22px #fff;">ENG</div>
<div class="t" style="left:1252.5px;top:732.2px;font-size:12.3px;line-height:15px;letter-spacing:-0.234px;color:#fff;-webkit-text-stroke:0.22px #fff;">18:37:50</div>
<div class="t" style="left:1246.0px;top:749.9px;font-size:12.3px;line-height:15px;letter-spacing:-0.155px;color:#fff;-webkit-text-stroke:0.22px #fff;">25.12.2023</div>
<svg class="abs" style="left:1324px;top:738px" width="28" height="28" viewBox="0 0 28 28">
<path d="M1.500 2.500H18.500V15.500H7.500L3.500 19.500V15.500H1.500Z" fill="#fff"/>
<path d="M4.500 6H15.500M4.500 9H15.500M4.500 12H12" stroke="#1b2f55" stroke-width="1.200"/>
<circle cx="16.500" cy="18" r="7.500" fill="#2a3550" stroke="#9aa0ac" stroke-width="1.300"/>
<path d="M15 15L17 14V22" stroke="#fff" stroke-width="1.500" fill="none"/>
</svg>
</body></html>
